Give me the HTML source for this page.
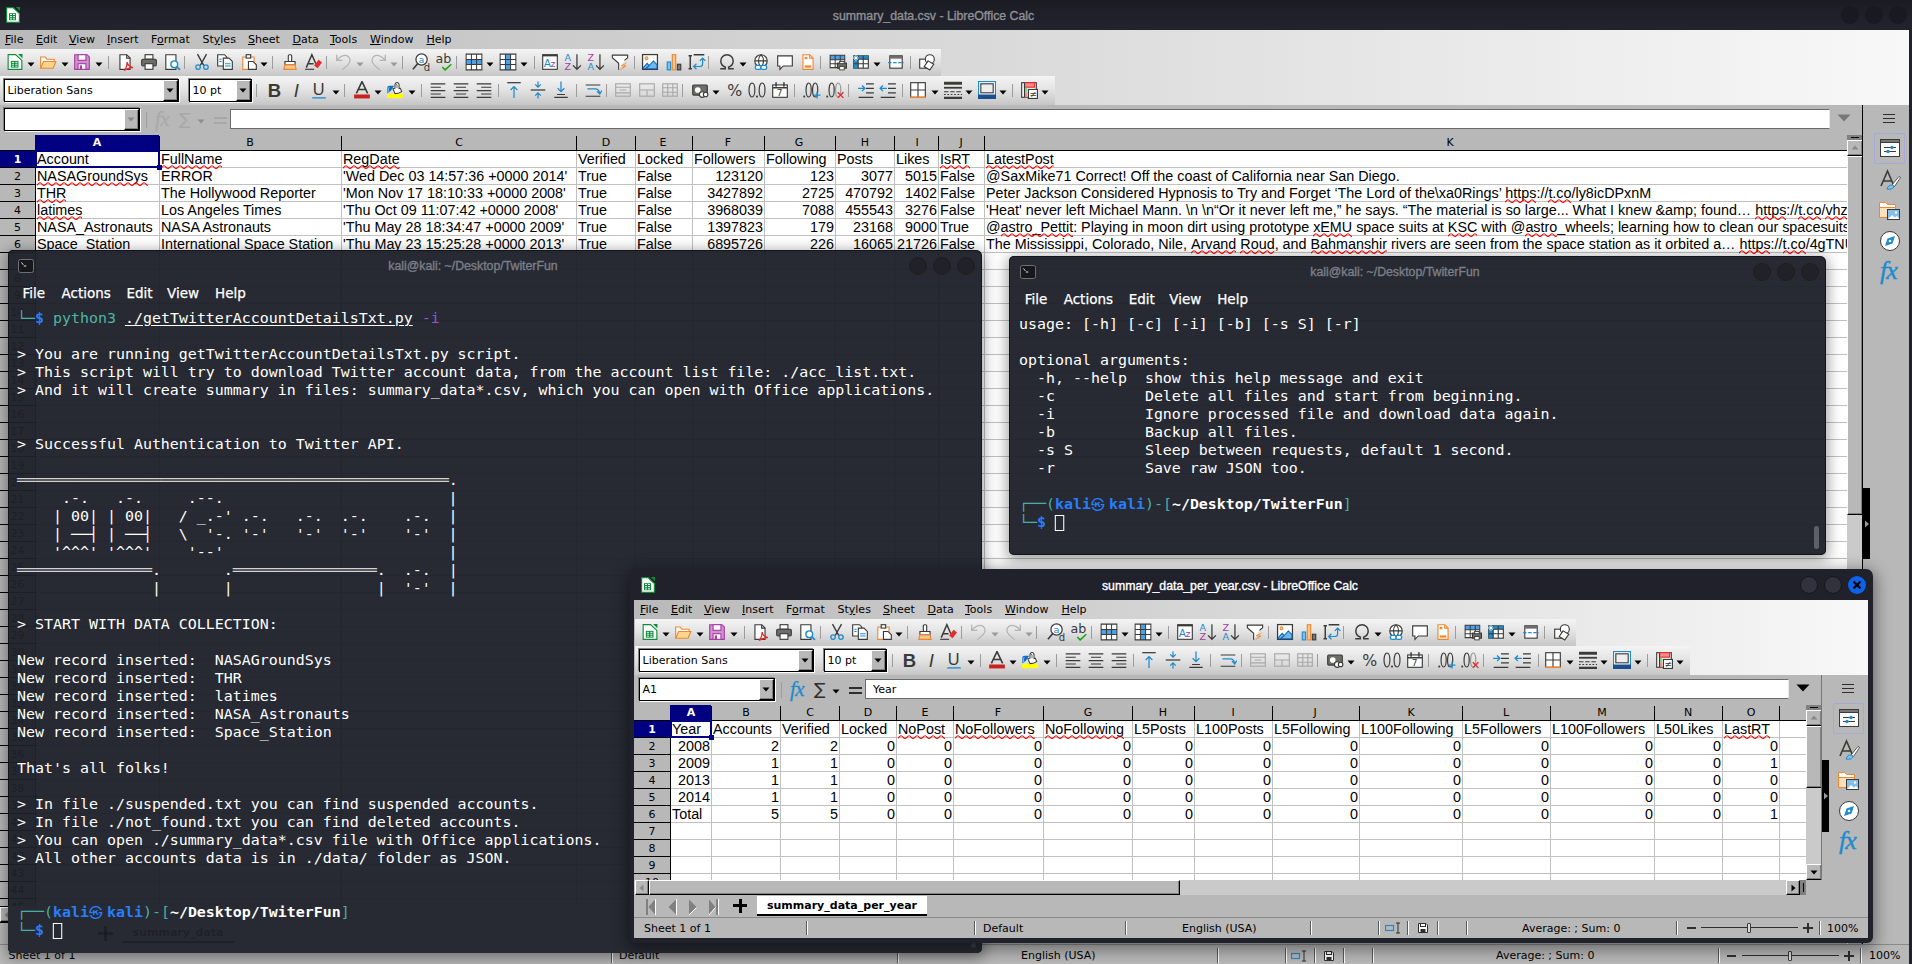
<!DOCTYPE html>
<html><head><meta charset="utf-8"><title>summary_data.csv - LibreOffice Calc</title>
<style>
html,body{margin:0;padding:0;}
body{width:1912px;height:964px;overflow:hidden;position:relative;background:#fff;font-family:"DejaVu Sans","Liberation Sans",sans-serif;}
div,span,svg{position:absolute;box-sizing:border-box;}
.ui{font-family:"DejaVu Sans","Liberation Sans",sans-serif;font-size:11px;color:#000;white-space:pre;}
.cell{font-family:"Liberation Sans",sans-serif;font-size:14.35px;color:#000;white-space:pre;line-height:17px;height:17px;}
.mono{font-family:"DejaVu Sans Mono","Liberation Mono",monospace;font-size:14.2px;line-height:18px;white-space:pre;color:#fff;transform-origin:0 0;transform:scaleX(1.05275);}
.kk{display:inline-block;width:17.098px;text-align:left;font-family:"Noto Sans CJK KR","Noto Sans CJK JP","DejaVu Sans",sans-serif;font-size:13px;line-height:10px;overflow:visible;}
.mono span{position:static;}
.u{text-decoration:underline;}
.sq{position:relative !important;display:inline-block;}
.sq svg{left:0;bottom:-0.7px;width:100%;height:4px;overflow:hidden;}
</style></head><body>
<svg width="0" height="0" style="left:0;top:0"><defs><pattern id="wv" width="8" height="4" patternUnits="userSpaceOnUse"><path d="M-1 3.4C0.5 3.4 1.5 0.7 3 0.7S5.500 3.4 7 3.4 9.500 0.7 11 0.7" fill="none" stroke="#ff0000" stroke-width="1.1"/></pattern></defs></svg>
<!-- main LibreOffice Calc window: summary_data.csv -->
<div style="left:0px;top:0px;width:1912px;height:30px;background:linear-gradient(180deg,#1b1c23,#22232d);"></div><div style="left:733.5px;top:7px;width:400px;text-align:center;font-family:'Liberation Sans',sans-serif;font-size:12.3px;-webkit-text-stroke:0.35px #8f9197;line-height:18px;color:#8f9197;white-space:pre">summary_data.csv - LibreOffice Calc</div><div style="left:1841px;top:6px;width:18px;height:18px;border-radius:50%;background:#191a21;"></div><div style="left:1865px;top:6px;width:18px;height:18px;border-radius:50%;background:#191a21;"></div><div style="left:1889px;top:6px;width:18px;height:18px;border-radius:50%;background:#191a21;"></div><svg style="left:6px;top:7px" width="14" height="16" viewBox="0 0 14 16"><path d="M0.600 0.600H7L13.400 6.500V15.400H0.600z" fill="#fff" stroke="#0f8a3a" stroke-width="1.200"/><path d="M9.800 0H14V4.200z" fill="#0f8a3a"/><rect x="3" y="6.200" width="7" height="7" fill="#0f8a3a"/><path d="M4 7.500h2M7 7.500h2M4 9.700h2M7 9.700h2M4 11.900h2M7 11.900h2" stroke="#fff" stroke-width="1"/></svg><div style="left:0px;top:30px;width:1912px;height:75px;background:linear-gradient(90deg,#b9b9b9,#f8f8f8);"></div><div class="ui" style="left:5px;top:32px;line-height:15px;font-size:11px"><span class="u" style="position:static">F</span>ile</div><div class="ui" style="left:36px;top:32px;line-height:15px;font-size:11px"><span class="u" style="position:static">E</span>dit</div><div class="ui" style="left:69px;top:32px;line-height:15px;font-size:11px"><span class="u" style="position:static">V</span>iew</div><div class="ui" style="left:107px;top:32px;line-height:15px;font-size:11px"><span class="u" style="position:static">I</span>nsert</div><div class="ui" style="left:151px;top:32px;line-height:15px;font-size:11px">F<span class="u" style="position:static">o</span>rmat</div><div class="ui" style="left:202.5px;top:32px;line-height:15px;font-size:11px">St<span class="u" style="position:static">y</span>les</div><div class="ui" style="left:248px;top:32px;line-height:15px;font-size:11px"><span class="u" style="position:static">S</span>heet</div><div class="ui" style="left:292.5px;top:32px;line-height:15px;font-size:11px"><span class="u" style="position:static">D</span>ata</div><div class="ui" style="left:330px;top:32px;line-height:15px;font-size:11px"><span class="u" style="position:static">T</span>ools</div><div class="ui" style="left:370px;top:32px;line-height:15px;font-size:11px"><span class="u" style="position:static">W</span>indow</div><div class="ui" style="left:426.5px;top:32px;line-height:15px;font-size:11px"><span class="u" style="position:static">H</span>elp</div><div style="left:0px;top:49px;width:941px;height:27px;background:linear-gradient(180deg,#f4f4f4 0%,#e4e4e4 45%,#c6c6c6 100%);"></div><div style="left:0px;top:76px;width:1055px;height:29px;background:linear-gradient(180deg,#f4f4f4 0%,#e4e4e4 45%,#c6c6c6 100%);"></div><svg style="left:5.699999999999999px;top:53.0px" width="18" height="18" viewBox="0 0 16 16"><path d="M1.900 1.400h6.600l5.600 5.200v8H1.900z" fill="#fff" stroke="#0f8a3a" stroke-width="1"/><path d="M10.700 0.900h3.900v3.700z" fill="#0f8a3a"/><rect x="4.300" y="7" width="6.800" height="6" fill="#0f8a3a"/><path d="M5.200 8.300h2M8.200 8.300h2M5.200 10h2M8.200 10h2M5.200 11.700h2M8.200 11.700h2" stroke="#fff" stroke-width=".8"/></svg><svg style="left:26.7px;top:61.5px" width="8" height="5" viewBox="0 0 8 5"><path d="M0.5 0.5h7L4 4.5z" fill="#000"/></svg><svg style="left:38.7px;top:53.0px" width="18" height="18" viewBox="0 0 16 16"><path d="M1.5 13.5v-10h4l1.5 2h6.5v2" fill="#fff" stroke="#ed8733"/><path d="M1.5 13.5l2.5-6h11l-2.5 6z" fill="#fbd68b" stroke="#ed8733"/></svg><svg style="left:60.7px;top:61.5px" width="8" height="5" viewBox="0 0 8 5"><path d="M0.5 0.5h7L4 4.5z" fill="#000"/></svg><svg style="left:73.2px;top:53.0px" width="18" height="18" viewBox="0 0 16 16"><path d="M1.5 1.5h11l2 2v11h-13z" fill="#d58fd3" stroke="#a33e9f"/><rect x="4.5" y="1.5" width="7" height="5" fill="#fff" stroke="#a33e9f"/><rect x="4.5" y="9.5" width="7" height="5" fill="#fff" stroke="#a33e9f"/><rect x="6" y="11" width="2" height="3.5" fill="#a33e9f"/></svg><svg style="left:95.2px;top:61.5px" width="8" height="5" viewBox="0 0 8 5"><path d="M0.5 0.5h7L4 4.5z" fill="#000"/></svg><div style="left:108px;top:56px;width:1px;height:13px;background:#9c9c9c;"></div><svg style="left:116.2px;top:53.0px" width="18" height="18" viewBox="0 0 16 16"><path d="M3.5 1.5h6l3 3v10h-9z" fill="#fff" stroke="#3a3a38"/><path d="M9.5 1.5v3h3" fill="none" stroke="#3a3a38"/><path d="M8 15c1-2 2-5 2-7 0 2 2 4 5 5-3 0-5 1-7 2z" fill="none" stroke="#e9292b" stroke-width="1.2"/></svg><svg style="left:139.7px;top:53.0px" width="18" height="18" viewBox="0 0 16 16"><rect x="4.5" y="1.5" width="7" height="4" fill="#fff" stroke="#3a3a38"/><rect x="1.5" y="5.5" width="13" height="6" rx="1" fill="#6d6d6b" stroke="#3a3a38"/><rect x="4.5" y="9.5" width="7" height="5" fill="#fff" stroke="#3a3a38"/></svg><svg style="left:163.2px;top:53.0px" width="18" height="18" viewBox="0 0 16 16"><path d="M2.5 1.5h9v13h-9z" fill="#fff" stroke="#3a3a38"/><circle cx="10" cy="10" r="3" fill="#fff" stroke="#1e8bcd" stroke-width="1.3"/><path d="M12.2 12.2l2.8 2.8" stroke="#1e8bcd" stroke-width="1.6"/></svg><div style="left:184px;top:56px;width:1px;height:13px;background:#9c9c9c;"></div><svg style="left:192.7px;top:53.0px" width="18" height="18" viewBox="0 0 16 16"><path d="M4 1l5.5 10M12 1L6.5 11" stroke="#3a3a38" stroke-width="1.2" fill="none"/><circle cx="4.5" cy="12.5" r="2" fill="none" stroke="#1e8bcd" stroke-width="1.2"/><circle cx="11.5" cy="12.5" r="2" fill="none" stroke="#1e8bcd" stroke-width="1.2"/></svg><svg style="left:216.2px;top:53.0px" width="18" height="18" viewBox="0 0 16 16"><path d="M1.5 1.5h6l2 2v8h-8z" fill="#fff" stroke="#3a3a38"/><path d="M6.5 4.5h5l3 3v7h-8z" fill="#fff" stroke="#3a3a38"/><path d="M8 9.5h5M8 11.5h5" stroke="#1e8bcd"/><path d="M3 5.5h2M3 7.5h2" stroke="#1e8bcd"/></svg><svg style="left:239.7px;top:53.0px" width="18" height="18" viewBox="0 0 16 16"><path d="M2.5 3.5h10v11h-10z" fill="#fff" stroke="#ed8733"/><rect x="5.5" y="1.5" width="4" height="3" fill="#fff" stroke="#3a3a38"/><path d="M7.5 7.5h4l3 3v4h-7z" fill="#fff" stroke="#3a3a38"/></svg><svg style="left:259.7px;top:61.5px" width="8" height="5" viewBox="0 0 8 5"><path d="M0.5 0.5h7L4 4.5z" fill="#000"/></svg><div style="left:272px;top:56px;width:1px;height:13px;background:#9c9c9c;"></div><svg style="left:280.7px;top:53.0px" width="18" height="18" viewBox="0 0 16 16"><rect x="6.5" y="1.5" width="3" height="6" rx="1" fill="#fff" stroke="#3a3a38"/><path d="M3.500 7.500h9v3h-9z" fill="#fff" stroke="#3a3a38"/><path d="M3.5 10.500h9l1 4h-11z" fill="#f8c58c" stroke="#ed8733"/></svg><svg style="left:304.2px;top:53.0px" width="18" height="18" viewBox="0 0 16 16"><path d="M2 13L7 1.500l3.500 8M3.500 9.5h5" fill="none" stroke="#3a3a38" stroke-width="1.300"/><path d="M1 14.5h8" stroke="#3a3a38"/><path d="M9 11l4-5 3 2.500-4 5z" fill="#e9292b"/></svg><div style="left:326px;top:56px;width:1px;height:13px;background:#9c9c9c;"></div><svg style="left:334.7px;top:53.0px" width="18" height="18" viewBox="0 0 16 16"><path d="M1.500 1.500v5h5M1.700 6.300C4.500 2.500 9 1 11.800 3.200c2.700 2.300 1.700 5.500-0.800 7.800L6.500 15" fill="none" stroke="#b4b4b4" stroke-width="1.150"/></svg><svg style="left:355.7px;top:61.5px" width="8" height="5" viewBox="0 0 8 5"><path d="M0.5 0.5h7L4 4.5z" fill="#9a9a9a"/></svg><svg style="left:368.7px;top:53.0px" width="18" height="18" viewBox="0 0 16 16"><path d="M14.500 1.500v5h-5M14.300 6.300C11.500 2.500 7 1 4.200 3.200c-2.700 2.300-1.700 5.500 0.800 7.800L9.500 15" fill="none" stroke="#b4b4b4" stroke-width="1.150"/></svg><svg style="left:390.2px;top:61.5px" width="8" height="5" viewBox="0 0 8 5"><path d="M0.5 0.5h7L4 4.5z" fill="#9a9a9a"/></svg><div style="left:402px;top:56px;width:1px;height:13px;background:#9c9c9c;"></div><svg style="left:411.7px;top:53.0px" width="18" height="18" viewBox="0 0 16 16"><circle cx="8.500" cy="5.800" r="5" fill="#fff" stroke="#3a3a38" stroke-width="1.100"/><path d="M5 9.500L0.800 14.500" stroke="#3a3a38" stroke-width="1.400"/><text x="5.700" y="8.800" font-size="8.500" font-family="DejaVu Sans" fill="#1e8bcd">a</text><text x="10.500" y="15.800" font-size="9" font-family="DejaVu Sans" fill="#3a3a38">d</text></svg><svg style="left:434.7px;top:53.0px" width="18" height="18" viewBox="0 0 16 16"><text x="0.500" y="8.500" font-size="10.500" font-family="DejaVu Sans" fill="#3a3a38" textLength="14" lengthAdjust="spacingAndGlyphs">ab</text><path d="M6.500 12.500l2.500 2.500 5.500-5" fill="none" stroke="#18a303" stroke-width="1.300"/></svg><div style="left:456px;top:56px;width:1px;height:13px;background:#9c9c9c;"></div><svg style="left:464.7px;top:53.0px" width="18" height="18" viewBox="0 0 16 16"><rect x="1" y="1" width="14" height="14" fill="#fff"/><rect x="1" y="5.700" width="14" height="4.600" fill="#4da0e6"/><path d="M1 1h14v14H1zM5.700 1v14M10.300 1v14M1 5.700h14M1 10.300h14" stroke="#3a3a38" stroke-width=".9" fill="none"/></svg><svg style="left:486.2px;top:61.5px" width="8" height="5" viewBox="0 0 8 5"><path d="M0.5 0.5h7L4 4.5z" fill="#000"/></svg><svg style="left:498.7px;top:53.0px" width="18" height="18" viewBox="0 0 16 16"><rect x="1" y="1" width="14" height="14" fill="#fff"/><rect x="5.700" y="1" width="4.600" height="14" fill="#4da0e6"/><path d="M1 1h14v14H1zM5.700 1v14M10.300 1v14M1 5.700h14M1 10.300h14" stroke="#3a3a38" stroke-width=".9" fill="none"/></svg><svg style="left:520.2px;top:61.5px" width="8" height="5" viewBox="0 0 8 5"><path d="M0.5 0.5h7L4 4.5z" fill="#000"/></svg><div style="left:534px;top:56px;width:1px;height:13px;background:#9c9c9c;"></div><svg style="left:541.2px;top:53.0px" width="18" height="18" viewBox="0 0 16 16"><rect x="1.500" y="1.500" width="13" height="13" fill="#fff" stroke="#3a3a38"/><rect x="1.500" y="1.500" width="13" height="1.500" fill="#3a3a38"/><text x="2.500" y="12.500" font-size="9.500" font-family="DejaVu Sans" fill="#1e8bcd">A</text><text x="8.500" y="12.500" font-size="8.500" font-family="DejaVu Sans" fill="#a33e9f">z</text></svg><svg style="left:564.2px;top:53.0px" width="18" height="18" viewBox="0 0 16 16"><text x="0.500" y="7.500" font-size="8.500" font-family="DejaVu Sans" fill="#1e8bcd">A</text><text x="0.500" y="15.500" font-size="8.500" font-family="DejaVu Sans" fill="#a33e9f">Z</text><path d="M11.500 1v13.500M8 11l3.500 3.500L15 11" fill="none" stroke="#3a3a38" stroke-width="1.100"/></svg><svg style="left:587.2px;top:53.0px" width="18" height="18" viewBox="0 0 16 16"><text x="0.500" y="7.500" font-size="8.500" font-family="DejaVu Sans" fill="#a33e9f">Z</text><text x="0.500" y="15.500" font-size="8.500" font-family="DejaVu Sans" fill="#1e8bcd">A</text><path d="M11.500 1v13.500M8 11l3.500 3.500L15 11" fill="none" stroke="#3a3a38" stroke-width="1.100"/></svg><svg style="left:610.7px;top:53.0px" width="18" height="18" viewBox="0 0 16 16"><path d="M12 6.500L14.800 4.200V1.900H1.200v2.300L6.800 9.200V14.800" fill="#fff" stroke="#3a3a38" stroke-width="1"/><path d="M15 8l-6.500 3.300 2.600.600L7.300 16l6.700-4.600-2.600-.600z" fill="#ed8733"/><path d="M11.500 10.500l-.8 1.500" stroke="#ffd27a" stroke-width=".8"/></svg><div style="left:634px;top:56px;width:1px;height:13px;background:#9c9c9c;"></div><svg style="left:641.2px;top:53.0px" width="18" height="18" viewBox="0 0 16 16"><rect x="1.400" y="1.400" width="13.200" height="13.200" fill="#fff" stroke="#3a3a38" stroke-width="1.100"/><path d="M2 13l3.500-3.800 1.800 2 3.700-4.200 3.200 3.300V14H2z" fill="#6db8ee" stroke="#0d62b0" stroke-width=".9"/><path d="M4 14l3.300-2.800" stroke="#0d62b0" stroke-width=".9"/><circle cx="4.900" cy="4.700" r="1.300" fill="#fdd17a" stroke="#ed8733" stroke-width=".9"/></svg><svg style="left:664.7px;top:53.0px" width="18" height="18" viewBox="0 0 16 16"><rect x="2" y="8" width="3" height="7" fill="#83beec" stroke="#1e8bcd"/><rect x="6.500" y="1.500" width="3" height="13.500" fill="#f8c58c" stroke="#ed8733"/><rect x="11" y="10" width="3" height="5" fill="#797774" stroke="#3a3a38"/></svg><svg style="left:687.7px;top:53.0px" width="18" height="18" viewBox="0 0 16 16"><path d="M2 2.500v11.500M0.500 2.500h3M0.500 14h3M5 1.500h9.500" fill="none" stroke="#3a3a38" stroke-width="1.300"/><path d="M13 4.500v5c0 1.500-1 2.500-2.500 2.500H5M7.500 9.500L5 12l2.500 2.500M10.500 7L13 4.500 15.500 7" fill="none" stroke="#1e8bcd" stroke-width="1.100"/></svg><div style="left:708px;top:56px;width:1px;height:13px;background:#9c9c9c;"></div><svg style="left:717.7px;top:53.0px" width="18" height="18" viewBox="0 0 16 16"><path d="M2 14h4.500v-1.500C4 11.500 2.500 9.500 2.500 7a5.500 5.500 0 0 1 11 0c0 2.500-1.500 4.500-4 5.500V14H14" fill="none" stroke="#3a3a38" stroke-width="1.300"/></svg><svg style="left:738.7px;top:61.5px" width="8" height="5" viewBox="0 0 8 5"><path d="M0.5 0.5h7L4 4.5z" fill="#000"/></svg><svg style="left:752.2px;top:53.0px" width="18" height="18" viewBox="0 0 16 16"><circle cx="8" cy="7" r="5.500" fill="#fff" stroke="#3a3a38"/><path d="M2.500 7h11M8 1.500c-3 3-3 8 0 11M8 1.500c3 3 3 8 0 11" fill="none" stroke="#3a3a38"/><rect x="3" y="11" width="5" height="3.500" rx="1.500" fill="#fff" stroke="#1e8bcd" stroke-width="1.200"/><rect x="8" y="11" width="5" height="3.500" rx="1.500" fill="#fff" stroke="#1e8bcd" stroke-width="1.200"/></svg><svg style="left:775.7px;top:53.0px" width="18" height="18" viewBox="0 0 16 16"><path d="M1.500 2.500h13v9h-8l-3 3v-3h-2z" fill="#fff" stroke="#3a3a38"/></svg><svg style="left:798.7px;top:53.0px" width="18" height="18" viewBox="0 0 16 16"><path d="M3.500 1.500h6l3 3v10h-9z" fill="#fff" stroke="#ed8733"/><path d="M9.500 1.500v3h3" fill="none" stroke="#ed8733"/><rect x="5" y="11" width="6" height="2" fill="#ed8733"/><rect x="5" y="3.500" width="2.500" height="2" fill="#ed8733"/></svg><div style="left:820px;top:56px;width:1px;height:13px;background:#9c9c9c;"></div><svg style="left:829.2px;top:53.0px" width="18" height="18" viewBox="0 0 16 16"><rect x="1" y="2" width="13" height="11" fill="#fff"/><rect x="1" y="2" width="13" height="4" fill="#4da0e6"/><path d="M1 2h13v11H1zM1 6h13M1 9.500h13M5.500 2v11M10 2v11" stroke="#3a3a38" stroke-width=".9" fill="none"/><rect x="7.500" y="9" width="8" height="4.500" fill="#6d6d6b" stroke="#3a3a38"/><rect x="9.500" y="7.500" width="4" height="2" fill="#fff" stroke="#3a3a38" stroke-width=".8"/><rect x="9.500" y="12" width="4" height="3" fill="#fff" stroke="#3a3a38" stroke-width=".8"/></svg><svg style="left:851.7px;top:53.0px" width="18" height="18" viewBox="0 0 16 16"><rect x="1.500" y="2.500" width="13" height="11" fill="#fff" stroke="#3a3a38"/><rect x="1.500" y="2.500" width="13" height="3" fill="#1e8bcd"/><rect x="1.500" y="2.500" width="4" height="11" fill="#1e8bcd"/><path d="M1.500 5.500h13M1.500 9.500h13M5.500 2.500v11M10 2.500v11" stroke="#3a3a38" fill="none"/><path d="M3.500 2v5M1 4.500h5M2 3l3 3M5 3L2 6" stroke="#fff" stroke-width=".8"/></svg><svg style="left:872.7px;top:61.5px" width="8" height="5" viewBox="0 0 8 5"><path d="M0.5 0.5h7L4 4.5z" fill="#000"/></svg><svg style="left:886.7px;top:53.0px" width="18" height="18" viewBox="0 0 16 16"><rect x="2.500" y="2.500" width="11" height="11" fill="#fff" stroke="#3a3a38"/><rect x="2.500" y="2.500" width="11" height="2.500" fill="#6d6d6b"/><path d="M1 8.500h14" stroke="#1e8bcd" stroke-width="1.200" stroke-dasharray="3 1.500"/></svg><div style="left:910px;top:56px;width:1px;height:13px;background:#9c9c9c;"></div><svg style="left:917.7px;top:53.0px" width="18" height="18" viewBox="0 0 16 16"><rect x="1.500" y="5.500" width="8" height="8" fill="#fff" stroke="#3a3a38"/><circle cx="10.500" cy="5.500" r="4" fill="#fff" stroke="#3a3a38"/><path d="M9 7l5 3-3.500 5-5-3z" fill="#fff" stroke="#3a3a38"/></svg><div style="left:256px;top:83.5px;width:1px;height:13px;background:#9c9c9c;"></div><svg style="left:265.2px;top:80.5px" width="18" height="18" viewBox="0 0 16 16"><text x="2.500" y="14" font-size="16.500" font-weight="bold" font-family="Liberation Sans" fill="#3a3a38">B</text></svg><svg style="left:288.2px;top:80.5px" width="18" height="18" viewBox="0 0 16 16"><text x="5" y="14" font-size="16.500" font-style="italic" font-family="Liberation Sans" fill="#3a3a38">I</text></svg><svg style="left:310.2px;top:80.5px" width="18" height="18" viewBox="0 0 16 16"><text x="2.500" y="12.300" font-size="14.500" font-family="Liberation Sans" fill="#3a3a38">U</text><path d="M2 15h12" stroke="#1e8bcd" stroke-width="1.200"/></svg><svg style="left:331.7px;top:89.5px" width="8" height="5" viewBox="0 0 8 5"><path d="M0.5 0.5h7L4 4.5z" fill="#000"/></svg><div style="left:344px;top:83.5px;width:1px;height:13px;background:#9c9c9c;"></div><svg style="left:352.7px;top:80.5px" width="18" height="18" viewBox="0 0 16 16"><path d="M3 11L8 0.500 13 11M5 7.500h6" fill="none" stroke="#3a3a38" stroke-width="1.400"/><rect x="1" y="12" width="14" height="3.500" fill="#c9211e"/></svg><svg style="left:373.7px;top:89.5px" width="8" height="5" viewBox="0 0 8 5"><path d="M0.5 0.5h7L4 4.5z" fill="#000"/></svg><svg style="left:386.2px;top:80.5px" width="18" height="18" viewBox="0 0 16 16"><rect x="1" y="11.300" width="14.200" height="3.900" fill="#ffff00"/><path d="M1.200 11.200V6.200c0-1.300.700-2 2-2h4L4.500 8.500z" fill="#0d6cc4"/><path d="M2.300 10V6.500c0-.700.300-1 .9-1" fill="none" stroke="#6db8ee" stroke-width=".9"/><path d="M6.100 6.900l2 4.300 2.700-.2 3.200-1.700-1.300-2.800-1.100.2V3.400c0-2.700-3.600-2.700-3.600 0v3z" fill="#fff" stroke="#3a3a38" stroke-width=".9"/><path d="M9.800 6.400V3.700c0-.900-.900-.900-.900 0" fill="none" stroke="#3a3a38" stroke-width=".7"/></svg><svg style="left:408.2px;top:89.5px" width="8" height="5" viewBox="0 0 8 5"><path d="M0.5 0.5h7L4 4.5z" fill="#000"/></svg><div style="left:421px;top:83.5px;width:1px;height:13px;background:#9c9c9c;"></div><svg style="left:429.2px;top:80.5px" width="18" height="18" viewBox="0 0 16 16"><path d="M1.500 2.500h13M1.500 5.500h9M1.500 8.500h13M1.500 11.500h9M1.500 14.500h13" stroke="#3a3a38"/></svg><svg style="left:452.2px;top:80.5px" width="18" height="18" viewBox="0 0 16 16"><path d="M1.500 2.500h13M3.500 5.500h9M1.500 8.500h13M3.500 11.500h9M1.500 14.500h13" stroke="#3a3a38"/></svg><svg style="left:475.2px;top:80.5px" width="18" height="18" viewBox="0 0 16 16"><path d="M1.500 2.500h13M5.500 5.500h9M1.500 8.500h13M5.500 11.500h9M1.500 14.500h13" stroke="#3a3a38"/></svg><div style="left:498px;top:83.5px;width:1px;height:13px;background:#9c9c9c;"></div><svg style="left:505.20000000000005px;top:80.5px" width="18" height="18" viewBox="0 0 16 16"><path d="M2 1.500h12" stroke="#3a3a38" stroke-width="1.100"/><path d="M8 15V5M5 8l3-3 3 3" fill="none" stroke="#1e8bcd" stroke-width="1.100"/></svg><svg style="left:529.2px;top:80.5px" width="18" height="18" viewBox="0 0 16 16"><path d="M1.500 8h13" stroke="#3a3a38" stroke-width="1.100"/><path d="M8 0.500v5M5.500 3L8 5.500 10.500 3M8 15.500v-5M5.500 13L8 10.500l2.500 2.500" fill="none" stroke="#1e8bcd" stroke-width="1.100"/></svg><svg style="left:552.2px;top:80.5px" width="18" height="18" viewBox="0 0 16 16"><path d="M2 14.500h12M4.500 12h7" stroke="#3a3a38" stroke-width="1.100"/><path d="M8 0.500v9M5 6.500l3 3 3-3" fill="none" stroke="#1e8bcd" stroke-width="1.100"/></svg><div style="left:576px;top:83.5px;width:1px;height:13px;background:#9c9c9c;"></div><svg style="left:583.7px;top:80.5px" width="18" height="18" viewBox="0 0 16 16"><path d="M1.500 3.500h13M1.500 13.500h13" fill="none" stroke="#3a3a38"/><path d="M3 7h7c2.500 0 3.500 1.500 4 4M11.500 9l2.500 2.500 1.800-3" fill="none" stroke="#1e8bcd" stroke-width="1.100"/></svg><div style="left:606px;top:83.5px;width:1px;height:13px;background:#9c9c9c;"></div><svg style="left:614.2px;top:80.5px" width="18" height="18" viewBox="0 0 16 16"><rect x="1.500" y="2.500" width="13" height="11" fill="none" stroke="#a8a8a8"/><path d="M1.500 5.500h13M1.500 10.500h13M5 8h6" stroke="#a8a8a8" fill="none"/></svg><svg style="left:637.7px;top:80.5px" width="18" height="18" viewBox="0 0 16 16"><rect x="1.500" y="2.500" width="13" height="11" fill="none" stroke="#a8a8a8"/><path d="M1.500 8h13M8 8v5.500" stroke="#a8a8a8" fill="none"/></svg><svg style="left:660.7px;top:80.5px" width="18" height="18" viewBox="0 0 16 16"><rect x="1.500" y="2.500" width="13" height="11" fill="none" stroke="#a8a8a8"/><path d="M1.500 6h13M1.500 10h13M6 2.500v11M10.500 2.500v11" stroke="#a8a8a8" fill="none"/></svg><div style="left:682px;top:83.5px;width:1px;height:13px;background:#9c9c9c;"></div><svg style="left:690.7px;top:80.5px" width="18" height="18" viewBox="0 0 16 16"><rect x="1.500" y="3.500" width="13" height="9" rx="1" fill="#6d6d6b" stroke="#3a3a38"/><circle cx="6" cy="8" r="2.500" fill="#fff"/><circle cx="10" cy="12" r="2.500" fill="#fff" stroke="#3a3a38"/><circle cx="13" cy="12" r="2" fill="#fff" stroke="#3a3a38"/></svg><svg style="left:712.2px;top:89.5px" width="8" height="5" viewBox="0 0 8 5"><path d="M0.5 0.5h7L4 4.5z" fill="#000"/></svg><svg style="left:725.7px;top:80.5px" width="18" height="18" viewBox="0 0 16 16"><text x="1" y="13.500" font-size="14" font-family="DejaVu Sans" fill="#3a3a38">%</text></svg><svg style="left:748.2px;top:80.5px" width="18" height="18" viewBox="0 0 16 16"><ellipse cx="3.500" cy="8" rx="2.600" ry="6.200" fill="none" stroke="#3a3a38" stroke-width="1.050"/><ellipse cx="12.500" cy="8" rx="2.600" ry="6.200" fill="none" stroke="#3a3a38" stroke-width="1.050"/><rect x="7.200" y="13" width="1.600" height="1.600" fill="#3a3a38"/></svg><svg style="left:771.2px;top:80.5px" width="18" height="18" viewBox="0 0 16 16"><rect x="1.500" y="3.500" width="13" height="11" fill="#fff" stroke="#3a3a38"/><path d="M4.500 1v4M11.500 1v4M1.500 6h13" stroke="#3a3a38" stroke-width="1.300"/><text x="5" y="13.500" font-size="8" font-family="DejaVu Sans" fill="#3a3a38">7</text></svg><div style="left:794px;top:83.5px;width:1px;height:13px;background:#9c9c9c;"></div><svg style="left:802.7px;top:80.5px" width="18" height="18" viewBox="0 0 16 16"><rect x="0.300" y="13" width="1.600" height="1.600" fill="#3a3a38"/><ellipse cx="5" cy="8" rx="2.300" ry="6.200" fill="none" stroke="#3a3a38" stroke-width="1.050"/><ellipse cx="10.800" cy="8" rx="2.300" ry="6.200" fill="none" stroke="#3a3a38" stroke-width="1.050"/><path d="M12.500 9.500v6M9.500 12.500h6" stroke="#1e8bcd" stroke-width="1.200"/></svg><svg style="left:825.7px;top:80.5px" width="18" height="18" viewBox="0 0 16 16"><rect x="0.300" y="13" width="1.600" height="1.600" fill="#3a3a38"/><ellipse cx="5" cy="8" rx="2.300" ry="6.200" fill="none" stroke="#3a3a38" stroke-width="1.050"/><ellipse cx="10.800" cy="8" rx="2.300" ry="6.200" fill="none" stroke="#9a9a9a" stroke-width="1.050"/><path d="M10.500 10l5 5M15.500 10l-5 5" stroke="#e9292b" stroke-width="1.200"/></svg><div style="left:848px;top:83.5px;width:1px;height:13px;background:#9c9c9c;"></div><svg style="left:856.7px;top:80.5px" width="18" height="18" viewBox="0 0 16 16"><path d="M8 2.500h7M8 6.500h7M8 10.500h7M1.500 14.500h13" stroke="#3a3a38"/><path d="M1 6.500h6M4.500 4l2.500 2.500-2.500 2.500" fill="none" stroke="#1e8bcd" stroke-width="1.200"/></svg><svg style="left:879.2px;top:80.5px" width="18" height="18" viewBox="0 0 16 16"><path d="M8 2.500h7M8 6.500h7M8 10.500h7M1.500 14.500h13" stroke="#3a3a38"/><path d="M7 6.500H1M3.500 4L1 6.500 3.500 9" fill="none" stroke="#1e8bcd" stroke-width="1.200"/></svg><div style="left:902px;top:83.5px;width:1px;height:13px;background:#9c9c9c;"></div><svg style="left:908.7px;top:80.5px" width="18" height="18" viewBox="0 0 16 16"><rect x="1.500" y="1.500" width="13" height="13" fill="#fff" stroke="#3a3a38"/><path d="M8 1.500v13M1.500 8h13" stroke="#3a3a38"/><path d="M1 14.500h14" stroke="#ed8733" stroke-width="1.400"/></svg><svg style="left:930.7px;top:89.5px" width="8" height="5" viewBox="0 0 8 5"><path d="M0.5 0.5h7L4 4.5z" fill="#000"/></svg><svg style="left:943.7px;top:80.5px" width="18" height="18" viewBox="0 0 16 16"><path d="M0 2h16" stroke="#3a3a38" stroke-width="2.600"/><path d="M0 6h16" stroke="#3a3a38" stroke-width="1.600"/><path d="M0 9.500h16" stroke="#3a3a38" stroke-dasharray="4 1.500"/><path d="M0 12h16" stroke="#3a3a38" stroke-dasharray="1.500 1.500"/><path d="M0 15h16" stroke="#3a3a38" stroke-width="2"/></svg><svg style="left:965.2px;top:89.5px" width="8" height="5" viewBox="0 0 8 5"><path d="M0.5 0.5h7L4 4.5z" fill="#000"/></svg><svg style="left:977.7px;top:80.5px" width="18" height="18" viewBox="0 0 16 16"><rect x="0.500" y="0.500" width="15" height="15" fill="#fff" stroke="#1e8bcd"/><rect x="2.500" y="2.500" width="11" height="8" fill="#eee" stroke="#3a3a38"/><rect x="0" y="12" width="16" height="4" fill="#1c4f91"/></svg><svg style="left:999.2px;top:89.5px" width="8" height="5" viewBox="0 0 8 5"><path d="M0.5 0.5h7L4 4.5z" fill="#000"/></svg><div style="left:1012px;top:83.5px;width:1px;height:13px;background:#9c9c9c;"></div><svg style="left:1019.7px;top:80.5px" width="18" height="18" viewBox="0 0 16 16"><rect x="1.500" y="1.500" width="13" height="13" fill="#fff" stroke="#3a3a38"/><rect x="4" y="1.500" width="9" height="4" fill="#f48a8a" stroke="#e9292b"/><rect x="4" y="6" width="2.500" height="4" fill="#7fd88a"/><rect x="4" y="10" width="2.500" height="4.500" fill="#f48a8a"/><path d="M4 1.500v13" stroke="#3a3a38"/><rect x="7.500" y="7.500" width="8" height="8" fill="#fff" stroke="#3a3a38"/><text x="8.500" y="14.500" font-size="8" font-family="DejaVu Sans" fill="#3a3a38">≠</text></svg><svg style="left:1041.2px;top:89.5px" width="8" height="5" viewBox="0 0 8 5"><path d="M0.5 0.5h7L4 4.5z" fill="#000"/></svg><div style="left:4px;top:79px;width:175px;height:23px;background:#fff;border:1px solid #000;box-shadow:-1px -1px 0 #808080,1px 1px 0 #fff;"></div><div class="ui" style="left:7.5px;top:83.5px;line-height:14px;font-size:11px">Liberation Sans</div><div style="left:163px;top:80px;width:15px;height:21px;background:#b8b8b8;border-left:1px solid #fff;border-top:1px solid #fff;border-right:1px solid #000;border-bottom:1px solid #000;box-shadow:inset -1px -1px 0 #808080;"></div><svg style="left:166.0px;top:87.5px" width="8" height="5" viewBox="0 0 8 5"><path d="M0.5 0.5h7L4 4.5z" fill="#000"/></svg><div style="left:189px;top:79px;width:63px;height:23px;background:#fff;border:1px solid #000;box-shadow:-1px -1px 0 #808080,1px 1px 0 #fff;"></div><div class="ui" style="left:192.5px;top:83.5px;line-height:14px;font-size:11px">10 pt</div><div style="left:236px;top:80px;width:15px;height:21px;background:#b8b8b8;border-left:1px solid #fff;border-top:1px solid #fff;border-right:1px solid #000;border-bottom:1px solid #000;box-shadow:inset -1px -1px 0 #808080;"></div><svg style="left:239.0px;top:87.5px" width="8" height="5" viewBox="0 0 8 5"><path d="M0.5 0.5h7L4 4.5z" fill="#000"/></svg><div style="left:0px;top:105px;width:1912px;height:30px;background:#b8b8b8;"></div><div style="left:4px;top:108px;width:136px;height:23px;background:#fff;border:1px solid #000;box-shadow:-1px -1px 0 #808080,1px 1px 0 #fff;"></div><div style="left:124px;top:109px;width:15px;height:21px;background:#b8b8b8;border-left:1px solid #fff;border-top:1px solid #fff;border-right:1px solid #000;border-bottom:1px solid #000;box-shadow:inset -1px -1px 0 #808080;"></div><svg style="left:127.0px;top:116.5px" width="8" height="5" viewBox="0 0 8 5"><path d="M0.5 0.5h7L4 4.5z" fill="#8a8a8a"/></svg><div style="left:146px;top:112px;width:1px;height:16px;background:#9c9c9c;"></div><div style="left:155px;top:108px;width:18px;height:22px;font-family:'Liberation Serif',serif;font-style:italic;font-size:21px;line-height:22px;color:#aaaaaa;letter-spacing:-0.5px;-webkit-text-stroke:0.3px #aaaaaa">fx</div><div style="left:179px;top:108px;width:14px;height:22px;font-family:'DejaVu Sans',sans-serif;font-size:17px;line-height:22px;color:#a8a8a8">∑</div><svg style="left:196.5px;top:119px" width="8" height="5" viewBox="0 0 8 5"><path d="M0.5 0.5h7L4 4.5z" fill="#8e8e8e"/></svg><div style="left:214px;top:117px;width:13px;height:2px;background:#a8a8a8;"></div><div style="left:214px;top:122px;width:13px;height:2px;background:#a8a8a8;"></div><div style="left:230px;top:109px;width:1600px;height:20px;background:#fff;border-top:1px solid #6a6a6a;border-left:1px solid #6a6a6a;border-bottom:1px solid #6a6a6a;border-right:1px solid #e8e8e8;"></div><svg style="left:1837px;top:114px" width="14" height="8" viewBox="0 0 14 8"><path d="M0.5 0.5h13L7 7.5z" fill="#777"/></svg><div style="left:0;top:135px;width:1847px;height:771px;overflow:hidden"><div style="left:0px;top:0px;width:1847px;height:771px;background:#fff;overflow:hidden;"></div><div style="left:0px;top:0px;width:1847px;height:15px;background:#b8b8b8;"></div><div style="left:0px;top:15px;width:1847px;height:1px;background:#000;"></div><div style="left:0px;top:16px;width:35px;height:755px;background:#b8b8b8;"></div><div style="left:35px;top:16px;width:1px;height:755px;background:#000;"></div><div style="left:35px;top:0px;width:124px;height:15px;background:#000080;"></div><div style="left:0px;top:16px;width:35px;height:17px;background:#000080;"></div><div style="left:159px;top:1px;width:1px;height:14px;background:#000;"></div><div style="left:159px;top:16px;width:1px;height:755px;background:#c0c0c0;"></div><div style="left:341px;top:1px;width:1px;height:14px;background:#000;"></div><div style="left:341px;top:16px;width:1px;height:755px;background:#c0c0c0;"></div><div style="left:576px;top:1px;width:1px;height:14px;background:#000;"></div><div style="left:576px;top:16px;width:1px;height:755px;background:#c0c0c0;"></div><div style="left:635px;top:1px;width:1px;height:14px;background:#000;"></div><div style="left:635px;top:16px;width:1px;height:755px;background:#c0c0c0;"></div><div style="left:692px;top:1px;width:1px;height:14px;background:#000;"></div><div style="left:692px;top:16px;width:1px;height:755px;background:#c0c0c0;"></div><div style="left:764px;top:1px;width:1px;height:14px;background:#000;"></div><div style="left:764px;top:16px;width:1px;height:755px;background:#c0c0c0;"></div><div style="left:835px;top:1px;width:1px;height:14px;background:#000;"></div><div style="left:835px;top:16px;width:1px;height:755px;background:#c0c0c0;"></div><div style="left:894px;top:1px;width:1px;height:14px;background:#000;"></div><div style="left:894px;top:16px;width:1px;height:755px;background:#c0c0c0;"></div><div style="left:938px;top:1px;width:1px;height:14px;background:#000;"></div><div style="left:938px;top:16px;width:1px;height:755px;background:#c0c0c0;"></div><div style="left:984px;top:1px;width:1px;height:14px;background:#000;"></div><div style="left:984px;top:16px;width:1px;height:755px;background:#c0c0c0;"></div><div style="left:1925px;top:1px;width:1px;height:14px;background:#000;"></div><div style="left:1925px;top:16px;width:1px;height:755px;background:#c0c0c0;"></div><div class="ui" style="left:77px;top:0px;width:40px;text-align:center;line-height:15px;font-size:11px;font-weight:bold;color:#fff;">A</div><div class="ui" style="left:230px;top:0px;width:40px;text-align:center;line-height:15px;font-size:11px;">B</div><div class="ui" style="left:439px;top:0px;width:40px;text-align:center;line-height:15px;font-size:11px;">C</div><div class="ui" style="left:586px;top:0px;width:40px;text-align:center;line-height:15px;font-size:11px;">D</div><div class="ui" style="left:643px;top:0px;width:40px;text-align:center;line-height:15px;font-size:11px;">E</div><div class="ui" style="left:708px;top:0px;width:40px;text-align:center;line-height:15px;font-size:11px;">F</div><div class="ui" style="left:779px;top:0px;width:40px;text-align:center;line-height:15px;font-size:11px;">G</div><div class="ui" style="left:845px;top:0px;width:40px;text-align:center;line-height:15px;font-size:11px;">H</div><div class="ui" style="left:897px;top:0px;width:40px;text-align:center;line-height:15px;font-size:11px;">I</div><div class="ui" style="left:941px;top:0px;width:40px;text-align:center;line-height:15px;font-size:11px;">J</div><div class="ui" style="left:1430px;top:0px;width:40px;text-align:center;line-height:15px;font-size:11px;">K</div><div style="left:36px;top:32px;width:1811px;height:1px;background:#c0c0c0;"></div><div style="left:0px;top:32px;width:35px;height:1px;background:#000;"></div><div class="ui" style="left:0px;top:17px;width:35px;text-align:center;line-height:16px;font-size:11px;font-weight:bold;color:#fff;">1</div><div style="left:36px;top:49px;width:1811px;height:1px;background:#c0c0c0;"></div><div style="left:0px;top:49px;width:35px;height:1px;background:#000;"></div><div class="ui" style="left:0px;top:34px;width:35px;text-align:center;line-height:16px;font-size:11px;">2</div><div style="left:36px;top:66px;width:1811px;height:1px;background:#c0c0c0;"></div><div style="left:0px;top:66px;width:35px;height:1px;background:#000;"></div><div class="ui" style="left:0px;top:51px;width:35px;text-align:center;line-height:16px;font-size:11px;">3</div><div style="left:36px;top:83px;width:1811px;height:1px;background:#c0c0c0;"></div><div style="left:0px;top:83px;width:35px;height:1px;background:#000;"></div><div class="ui" style="left:0px;top:68px;width:35px;text-align:center;line-height:16px;font-size:11px;">4</div><div style="left:36px;top:100px;width:1811px;height:1px;background:#c0c0c0;"></div><div style="left:0px;top:100px;width:35px;height:1px;background:#000;"></div><div class="ui" style="left:0px;top:85px;width:35px;text-align:center;line-height:16px;font-size:11px;">5</div><div style="left:36px;top:117px;width:1811px;height:1px;background:#c0c0c0;"></div><div style="left:0px;top:117px;width:35px;height:1px;background:#000;"></div><div class="ui" style="left:0px;top:102px;width:35px;text-align:center;line-height:16px;font-size:11px;">6</div><div style="left:36px;top:134px;width:1811px;height:1px;background:#c0c0c0;"></div><div style="left:0px;top:134px;width:35px;height:1px;background:#000;"></div><div class="ui" style="left:0px;top:119px;width:35px;text-align:center;line-height:16px;font-size:11px;">7</div><div style="left:36px;top:151px;width:1811px;height:1px;background:#c0c0c0;"></div><div style="left:0px;top:151px;width:35px;height:1px;background:#000;"></div><div class="ui" style="left:0px;top:136px;width:35px;text-align:center;line-height:16px;font-size:11px;">8</div><div style="left:36px;top:168px;width:1811px;height:1px;background:#c0c0c0;"></div><div style="left:0px;top:168px;width:35px;height:1px;background:#000;"></div><div class="ui" style="left:0px;top:153px;width:35px;text-align:center;line-height:16px;font-size:11px;">9</div><div style="left:36px;top:185px;width:1811px;height:1px;background:#c0c0c0;"></div><div style="left:0px;top:185px;width:35px;height:1px;background:#000;"></div><div class="ui" style="left:0px;top:170px;width:35px;text-align:center;line-height:16px;font-size:11px;">10</div><div style="left:36px;top:202px;width:1811px;height:1px;background:#c0c0c0;"></div><div style="left:0px;top:202px;width:35px;height:1px;background:#000;"></div><div class="ui" style="left:0px;top:187px;width:35px;text-align:center;line-height:16px;font-size:11px;">11</div><div style="left:36px;top:219px;width:1811px;height:1px;background:#c0c0c0;"></div><div style="left:0px;top:219px;width:35px;height:1px;background:#000;"></div><div class="ui" style="left:0px;top:204px;width:35px;text-align:center;line-height:16px;font-size:11px;">12</div><div style="left:36px;top:236px;width:1811px;height:1px;background:#c0c0c0;"></div><div style="left:0px;top:236px;width:35px;height:1px;background:#000;"></div><div class="ui" style="left:0px;top:221px;width:35px;text-align:center;line-height:16px;font-size:11px;">13</div><div style="left:36px;top:253px;width:1811px;height:1px;background:#c0c0c0;"></div><div style="left:0px;top:253px;width:35px;height:1px;background:#000;"></div><div class="ui" style="left:0px;top:238px;width:35px;text-align:center;line-height:16px;font-size:11px;">14</div><div style="left:36px;top:270px;width:1811px;height:1px;background:#c0c0c0;"></div><div style="left:0px;top:270px;width:35px;height:1px;background:#000;"></div><div class="ui" style="left:0px;top:255px;width:35px;text-align:center;line-height:16px;font-size:11px;">15</div><div style="left:36px;top:287px;width:1811px;height:1px;background:#c0c0c0;"></div><div style="left:0px;top:287px;width:35px;height:1px;background:#000;"></div><div class="ui" style="left:0px;top:272px;width:35px;text-align:center;line-height:16px;font-size:11px;">16</div><div style="left:36px;top:304px;width:1811px;height:1px;background:#c0c0c0;"></div><div style="left:0px;top:304px;width:35px;height:1px;background:#000;"></div><div class="ui" style="left:0px;top:289px;width:35px;text-align:center;line-height:16px;font-size:11px;">17</div><div style="left:36px;top:321px;width:1811px;height:1px;background:#c0c0c0;"></div><div style="left:0px;top:321px;width:35px;height:1px;background:#000;"></div><div class="ui" style="left:0px;top:306px;width:35px;text-align:center;line-height:16px;font-size:11px;">18</div><div style="left:36px;top:338px;width:1811px;height:1px;background:#c0c0c0;"></div><div style="left:0px;top:338px;width:35px;height:1px;background:#000;"></div><div class="ui" style="left:0px;top:323px;width:35px;text-align:center;line-height:16px;font-size:11px;">19</div><div style="left:36px;top:355px;width:1811px;height:1px;background:#c0c0c0;"></div><div style="left:0px;top:355px;width:35px;height:1px;background:#000;"></div><div class="ui" style="left:0px;top:340px;width:35px;text-align:center;line-height:16px;font-size:11px;">20</div><div style="left:36px;top:372px;width:1811px;height:1px;background:#c0c0c0;"></div><div style="left:0px;top:372px;width:35px;height:1px;background:#000;"></div><div class="ui" style="left:0px;top:357px;width:35px;text-align:center;line-height:16px;font-size:11px;">21</div><div style="left:36px;top:389px;width:1811px;height:1px;background:#c0c0c0;"></div><div style="left:0px;top:389px;width:35px;height:1px;background:#000;"></div><div class="ui" style="left:0px;top:374px;width:35px;text-align:center;line-height:16px;font-size:11px;">22</div><div style="left:36px;top:406px;width:1811px;height:1px;background:#c0c0c0;"></div><div style="left:0px;top:406px;width:35px;height:1px;background:#000;"></div><div class="ui" style="left:0px;top:391px;width:35px;text-align:center;line-height:16px;font-size:11px;">23</div><div style="left:36px;top:423px;width:1811px;height:1px;background:#c0c0c0;"></div><div style="left:0px;top:423px;width:35px;height:1px;background:#000;"></div><div class="ui" style="left:0px;top:408px;width:35px;text-align:center;line-height:16px;font-size:11px;">24</div><div style="left:36px;top:440px;width:1811px;height:1px;background:#c0c0c0;"></div><div style="left:0px;top:440px;width:35px;height:1px;background:#000;"></div><div class="ui" style="left:0px;top:425px;width:35px;text-align:center;line-height:16px;font-size:11px;">25</div><div style="left:36px;top:457px;width:1811px;height:1px;background:#c0c0c0;"></div><div style="left:0px;top:457px;width:35px;height:1px;background:#000;"></div><div class="ui" style="left:0px;top:442px;width:35px;text-align:center;line-height:16px;font-size:11px;">26</div><div style="left:36px;top:474px;width:1811px;height:1px;background:#c0c0c0;"></div><div style="left:0px;top:474px;width:35px;height:1px;background:#000;"></div><div class="ui" style="left:0px;top:459px;width:35px;text-align:center;line-height:16px;font-size:11px;">27</div><div style="left:36px;top:491px;width:1811px;height:1px;background:#c0c0c0;"></div><div style="left:0px;top:491px;width:35px;height:1px;background:#000;"></div><div class="ui" style="left:0px;top:476px;width:35px;text-align:center;line-height:16px;font-size:11px;">28</div><div style="left:36px;top:508px;width:1811px;height:1px;background:#c0c0c0;"></div><div style="left:0px;top:508px;width:35px;height:1px;background:#000;"></div><div class="ui" style="left:0px;top:493px;width:35px;text-align:center;line-height:16px;font-size:11px;">29</div><div style="left:36px;top:525px;width:1811px;height:1px;background:#c0c0c0;"></div><div style="left:0px;top:525px;width:35px;height:1px;background:#000;"></div><div class="ui" style="left:0px;top:510px;width:35px;text-align:center;line-height:16px;font-size:11px;">30</div><div style="left:36px;top:542px;width:1811px;height:1px;background:#c0c0c0;"></div><div style="left:0px;top:542px;width:35px;height:1px;background:#000;"></div><div class="ui" style="left:0px;top:527px;width:35px;text-align:center;line-height:16px;font-size:11px;">31</div><div style="left:36px;top:559px;width:1811px;height:1px;background:#c0c0c0;"></div><div style="left:0px;top:559px;width:35px;height:1px;background:#000;"></div><div class="ui" style="left:0px;top:544px;width:35px;text-align:center;line-height:16px;font-size:11px;">32</div><div style="left:36px;top:576px;width:1811px;height:1px;background:#c0c0c0;"></div><div style="left:0px;top:576px;width:35px;height:1px;background:#000;"></div><div class="ui" style="left:0px;top:561px;width:35px;text-align:center;line-height:16px;font-size:11px;">33</div><div style="left:36px;top:593px;width:1811px;height:1px;background:#c0c0c0;"></div><div style="left:0px;top:593px;width:35px;height:1px;background:#000;"></div><div class="ui" style="left:0px;top:578px;width:35px;text-align:center;line-height:16px;font-size:11px;">34</div><div style="left:36px;top:610px;width:1811px;height:1px;background:#c0c0c0;"></div><div style="left:0px;top:610px;width:35px;height:1px;background:#000;"></div><div class="ui" style="left:0px;top:595px;width:35px;text-align:center;line-height:16px;font-size:11px;">35</div><div style="left:36px;top:627px;width:1811px;height:1px;background:#c0c0c0;"></div><div style="left:0px;top:627px;width:35px;height:1px;background:#000;"></div><div class="ui" style="left:0px;top:612px;width:35px;text-align:center;line-height:16px;font-size:11px;">36</div><div style="left:36px;top:644px;width:1811px;height:1px;background:#c0c0c0;"></div><div style="left:0px;top:644px;width:35px;height:1px;background:#000;"></div><div class="ui" style="left:0px;top:629px;width:35px;text-align:center;line-height:16px;font-size:11px;">37</div><div style="left:36px;top:661px;width:1811px;height:1px;background:#c0c0c0;"></div><div style="left:0px;top:661px;width:35px;height:1px;background:#000;"></div><div class="ui" style="left:0px;top:646px;width:35px;text-align:center;line-height:16px;font-size:11px;">38</div><div style="left:36px;top:678px;width:1811px;height:1px;background:#c0c0c0;"></div><div style="left:0px;top:678px;width:35px;height:1px;background:#000;"></div><div class="ui" style="left:0px;top:663px;width:35px;text-align:center;line-height:16px;font-size:11px;">39</div><div style="left:36px;top:695px;width:1811px;height:1px;background:#c0c0c0;"></div><div style="left:0px;top:695px;width:35px;height:1px;background:#000;"></div><div class="ui" style="left:0px;top:680px;width:35px;text-align:center;line-height:16px;font-size:11px;">40</div><div style="left:36px;top:712px;width:1811px;height:1px;background:#c0c0c0;"></div><div style="left:0px;top:712px;width:35px;height:1px;background:#000;"></div><div class="ui" style="left:0px;top:697px;width:35px;text-align:center;line-height:16px;font-size:11px;">41</div><div style="left:36px;top:729px;width:1811px;height:1px;background:#c0c0c0;"></div><div style="left:0px;top:729px;width:35px;height:1px;background:#000;"></div><div class="ui" style="left:0px;top:714px;width:35px;text-align:center;line-height:16px;font-size:11px;">42</div><div style="left:36px;top:746px;width:1811px;height:1px;background:#c0c0c0;"></div><div style="left:0px;top:746px;width:35px;height:1px;background:#000;"></div><div class="ui" style="left:0px;top:731px;width:35px;text-align:center;line-height:16px;font-size:11px;">43</div><div style="left:36px;top:763px;width:1811px;height:1px;background:#c0c0c0;"></div><div style="left:0px;top:763px;width:35px;height:1px;background:#000;"></div><div class="ui" style="left:0px;top:748px;width:35px;text-align:center;line-height:16px;font-size:11px;">44</div><div style="left:36px;top:780px;width:1811px;height:1px;background:#c0c0c0;"></div><div style="left:0px;top:780px;width:35px;height:1px;background:#000;"></div><div class="ui" style="left:0px;top:765px;width:35px;text-align:center;line-height:16px;font-size:11px;">45</div><div class="cell" style="left:37px;top:16px;">Account</div><div class="cell" style="left:161px;top:16px;"><span class="sq">FullName<svg><rect width="100%" height="4" fill="url(#wv)"/></svg></span></div><div class="cell" style="left:343px;top:16px;"><span class="sq">RegDate<svg><rect width="100%" height="4" fill="url(#wv)"/></svg></span></div><div class="cell" style="left:578px;top:16px;">Verified</div><div class="cell" style="left:637px;top:16px;">Locked</div><div class="cell" style="left:694px;top:16px;">Followers</div><div class="cell" style="left:766px;top:16px;">Following</div><div class="cell" style="left:837px;top:16px;">Posts</div><div class="cell" style="left:896px;top:16px;">Likes</div><div class="cell" style="left:940px;top:16px;"><span class="sq">IsRT<svg><rect width="100%" height="4" fill="url(#wv)"/></svg></span></div><div class="cell" style="left:986px;top:16px;"><span class="sq">LatestPost<svg><rect width="100%" height="4" fill="url(#wv)"/></svg></span></div><div class="cell" style="left:37px;top:33px;"><span class="sq">NASAGroundSys<svg><rect width="100%" height="4" fill="url(#wv)"/></svg></span></div><div class="cell" style="left:161px;top:33px;">ERROR</div><div class="cell" style="left:343px;top:33px;">'Wed Dec 03 14:57:36 +0000 2014'</div><div class="cell" style="left:578px;top:33px;">True</div><div class="cell" style="left:637px;top:33px;">False</div><div class="cell" style="left:692px;top:33px;width:71px;text-align:right;">123120</div><div class="cell" style="left:764px;top:33px;width:70px;text-align:right;">123</div><div class="cell" style="left:835px;top:33px;width:58px;text-align:right;">3077</div><div class="cell" style="left:894px;top:33px;width:43px;text-align:right;">5015</div><div class="cell" style="left:940px;top:33px;">False</div><div class="cell" style="left:986px;top:33px;">@SaxMike71 Correct! Off the coast of California near San Diego.</div><div class="cell" style="left:37px;top:50px;"><span class="sq">THR<svg><rect width="100%" height="4" fill="url(#wv)"/></svg></span></div><div class="cell" style="left:161px;top:50px;">The Hollywood Reporter</div><div class="cell" style="left:343px;top:50px;">'Mon Nov 17 18:10:33 +0000 2008'</div><div class="cell" style="left:578px;top:50px;">True</div><div class="cell" style="left:637px;top:50px;">False</div><div class="cell" style="left:692px;top:50px;width:71px;text-align:right;">3427892</div><div class="cell" style="left:764px;top:50px;width:70px;text-align:right;">2725</div><div class="cell" style="left:835px;top:50px;width:58px;text-align:right;">470792</div><div class="cell" style="left:894px;top:50px;width:43px;text-align:right;">1402</div><div class="cell" style="left:940px;top:50px;">False</div><div class="cell" style="left:986px;top:50px;">Peter Jackson Considered Hypnosis to Try and Forget ‘The Lord of the\xa0Rings’ <span class="sq">https<svg><rect width="100%" height="4" fill="url(#wv)"/></svg></span>://<span class="sq">t.co<svg><rect width="100%" height="4" fill="url(#wv)"/></svg></span>/ly8icDPxnM</div><div class="cell" style="left:37px;top:67px;"><span class="sq">latimes<svg><rect width="100%" height="4" fill="url(#wv)"/></svg></span></div><div class="cell" style="left:161px;top:67px;">Los Angeles Times</div><div class="cell" style="left:343px;top:67px;">'Thu Oct 09 11:07:42 +0000 2008'</div><div class="cell" style="left:578px;top:67px;">True</div><div class="cell" style="left:637px;top:67px;">False</div><div class="cell" style="left:692px;top:67px;width:71px;text-align:right;">3968039</div><div class="cell" style="left:764px;top:67px;width:70px;text-align:right;">7088</div><div class="cell" style="left:835px;top:67px;width:58px;text-align:right;">455543</div><div class="cell" style="left:894px;top:67px;width:43px;text-align:right;">3276</div><div class="cell" style="left:940px;top:67px;">False</div><div class="cell" style="left:986px;top:67px;">'Heat' never left Michael Mann. \n \n“Or it never left me,” he says. “The material is so large... What I knew &amp;amp; found… <span class="sq">https<svg><rect width="100%" height="4" fill="url(#wv)"/></svg></span>://<span class="sq">t.co<svg><rect width="100%" height="4" fill="url(#wv)"/></svg></span>/<span class="sq">vhzJ<svg><rect width="100%" height="4" fill="url(#wv)"/></svg></span></div><div class="cell" style="left:37px;top:84px;">NASA_Astronauts</div><div class="cell" style="left:161px;top:84px;">NASA Astronauts</div><div class="cell" style="left:343px;top:84px;">'Thu May 28 18:34:47 +0000 2009'</div><div class="cell" style="left:578px;top:84px;">True</div><div class="cell" style="left:637px;top:84px;">False</div><div class="cell" style="left:692px;top:84px;width:71px;text-align:right;">1397823</div><div class="cell" style="left:764px;top:84px;width:70px;text-align:right;">179</div><div class="cell" style="left:835px;top:84px;width:58px;text-align:right;">23168</div><div class="cell" style="left:894px;top:84px;width:43px;text-align:right;">9000</div><div class="cell" style="left:940px;top:84px;">True</div><div class="cell" style="left:986px;top:84px;">@<span class="sq">astro_Pettit<svg><rect width="100%" height="4" fill="url(#wv)"/></svg></span>: Playing in moon dirt using prototype <span class="sq">xEMU<svg><rect width="100%" height="4" fill="url(#wv)"/></svg></span> space suits at <span class="sq">KSC<svg><rect width="100%" height="4" fill="url(#wv)"/></svg></span> with @<span class="sq">astro<svg><rect width="100%" height="4" fill="url(#wv)"/></svg></span>_wheels; learning how to clean our spacesuits is</div><div class="cell" style="left:37px;top:101px;">Space_Station</div><div class="cell" style="left:161px;top:101px;">International Space Station</div><div class="cell" style="left:343px;top:101px;">'Thu May 23 15:25:28 +0000 2013'</div><div class="cell" style="left:578px;top:101px;">True</div><div class="cell" style="left:637px;top:101px;">False</div><div class="cell" style="left:692px;top:101px;width:71px;text-align:right;">6895726</div><div class="cell" style="left:764px;top:101px;width:70px;text-align:right;">226</div><div class="cell" style="left:835px;top:101px;width:58px;text-align:right;">16065</div><div class="cell" style="left:894px;top:101px;width:43px;text-align:right;">21726</div><div class="cell" style="left:940px;top:101px;">False</div><div class="cell" style="left:986px;top:101px;">The Mississippi, Colorado, Nile, <span class="sq">Arvand<svg><rect width="100%" height="4" fill="url(#wv)"/></svg></span> <span class="sq">Roud<svg><rect width="100%" height="4" fill="url(#wv)"/></svg></span>, and <span class="sq">Bahmanshir<svg><rect width="100%" height="4" fill="url(#wv)"/></svg></span> rivers are seen from the space station as it orbited a… <span class="sq">https<svg><rect width="100%" height="4" fill="url(#wv)"/></svg></span>://<span class="sq">t.co<svg><rect width="100%" height="4" fill="url(#wv)"/></svg></span>/4gTNUx</div><div style="left:35px;top:15px;width:125px;height:18px;border:2px solid #000080;"></div><div style="left:157px;top:30px;width:5px;height:5px;background:#000080;border:0;"></div></div><div style="left:1847px;top:135px;width:16px;height:811px;background:#cacaca;"></div><div style="left:1847px;top:135px;width:16px;height:5px;background:#808080;"></div><div style="left:1851px;top:137px;width:8px;height:1px;background:#000;"></div><div style="left:1847px;top:140px;width:16px;height:16px;background:#b8b8b8;border-left:1px solid #fff;border-top:1px solid #fff;border-right:1px solid #000;border-bottom:1px solid #000;box-shadow:inset -1px -1px 0 #808080;"></div><svg style="left:1851.0px;top:145.0px" width="8" height="5" viewBox="0 0 8 5"><path d="M0.5 4.5h7L4 0.5z" fill="#8a8a8a"/></svg><div style="left:1847px;top:156px;width:16px;height:359px;background:#b8b8b8;border-left:1px solid #fff;border-top:1px solid #fff;border-right:1px solid #000;border-bottom:1px solid #000;box-shadow:inset -1px -1px 0 #808080;"></div><div style="left:1847px;top:930px;width:16px;height:16px;background:#b8b8b8;border-left:1px solid #fff;border-top:1px solid #fff;border-right:1px solid #000;border-bottom:1px solid #000;box-shadow:inset -1px -1px 0 #808080;"></div><svg style="left:1851.0px;top:936.0px" width="8" height="5" viewBox="0 0 8 5"><path d="M0.5 0.5h7L4 4.5z" fill="#000"/></svg><div style="left:1863px;top:105px;width:46px;height:841px;background:#b8b8b8;"></div><div style="left:1862px;top:105px;width:1px;height:841px;background:#000;"></div><div style="left:1883px;top:114px;width:12px;height:1px;background:#2e2e2e;"></div><div style="left:1883px;top:118px;width:12px;height:1px;background:#2e2e2e;"></div><div style="left:1883px;top:122px;width:12px;height:1px;background:#2e2e2e;"></div><div style="left:1874px;top:133px;width:31px;height:31px;border:1px solid #a9a9d6;border-radius:2px;"></div><svg style="left:1877.5px;top:136px" width="24" height="24" viewBox="0 0 24 24"><rect x="2.500" y="3.500" width="19" height="17" fill="#fafafa" stroke="#3a3a38"/><rect x="2.500" y="3.500" width="19" height="3" fill="#797774" stroke="#3a3a38"/><path d="M6 11.500h12M6 15.500h12" stroke="#3a3a38"/><circle cx="14" cy="11.500" r="1.700" fill="#1e8bcd"/><circle cx="10" cy="15.500" r="1.700" fill="#1e8bcd"/></svg><svg style="left:1877.5px;top:168px" width="24" height="24" viewBox="0 0 24 24"><path d="M3 18L9.500 3 16 18M5.500 13h8" fill="none" stroke="#3a3a38" stroke-width="1.600"/><path d="M14 17l7-8.500 1.500 1-6 9z" fill="#fff" stroke="#3a3a38" stroke-width=".8"/><path d="M9 21c1-3 3-4.500 5.500-4 1.500 1 1.500 2.500 0 3.500-2 1-4 1-5.500.5z" fill="#83beec" stroke="#1e8bcd"/></svg><svg style="left:1877.5px;top:199px" width="24" height="24" viewBox="0 0 24 24"><path d="M1.500 18.500v-15h6l2 2h8v3" fill="#fff" stroke="#ed8733"/><path d="M1.500 18.500v-10h16v10z" fill="#fbe0bd" stroke="#ed8733"/><rect x="9.500" y="10.500" width="12" height="10" fill="#83beec" stroke="#3a3a38"/><path d="M10 20l4-4 3 2.500 2-1.500 2.500 3z" fill="#fff"/><circle cx="18" cy="13.500" r="1.200" fill="#fff"/></svg><svg style="left:1877.5px;top:229px" width="24" height="24" viewBox="0 0 24 24"><circle cx="12" cy="12" r="9.500" fill="#fff" stroke="#3a3a38"/><path d="M17 7l-2.500 7.500L7 17l2.500-7.500z" fill="#1e8bcd"/><circle cx="12" cy="12" r="1.300" fill="#fff"/></svg><div style="left:1880px;top:256px;width:26px;height:30px;font-family:'Liberation Serif',serif;font-style:italic;font-size:26px;line-height:30px;color:#1e8bcd;letter-spacing:-1px;-webkit-text-stroke:0.4px #1e8bcd">fx</div><div style="left:1863px;top:488px;width:7px;height:71px;background:#000;"></div><svg style="left:1864px;top:519.5px" width="6" height="8" viewBox="0 0 6 8"><path d="M1 0.500v7L5 4z" fill="#9a9a9a"/></svg><div style="left:0px;top:906px;width:1847px;height:40px;background:#b8b8b8;"></div><div style="left:0px;top:906px;width:1847px;height:1px;background:#000;"></div><div style="left:0px;top:907px;width:1830px;height:15px;background:#cacaca;"></div><div style="left:0px;top:907px;width:14px;height:15px;background:#b8b8b8;border-left:1px solid #fff;border-top:1px solid #fff;border-right:1px solid #000;border-bottom:1px solid #000;box-shadow:inset -1px -1px 0 #808080;"></div><svg style="left:4.0px;top:910.5px" width="5" height="8" viewBox="0 0 5 8"><path d="M4.5 0.5v7L0.5 4z" fill="#8a8a8a"/></svg><div style="left:14px;top:907px;width:700px;height:15px;background:#b8b8b8;border-left:1px solid #fff;border-top:1px solid #fff;border-right:1px solid #000;border-bottom:1px solid #000;box-shadow:inset -1px -1px 0 #808080;"></div><div style="left:0px;top:922px;width:1847px;height:1px;background:#000;"></div><div style="left:0px;top:944px;width:1912px;height:22px;background:#b8b8b8;"></div><div style="left:0px;top:944px;width:1912px;height:1px;background:#8a8a8a;"></div><div class="ui" style="left:8.5px;top:949.0px;line-height:14px">Sheet 1 of 1</div><div class="ui" style="left:619px;top:949.0px;line-height:14px">Default</div><div class="ui" style="left:1021px;top:949.0px;line-height:14px">English (USA)</div><div class="ui" style="left:1496px;top:949.0px;line-height:14px">Average: ; Sum: 0</div><div class="ui" style="left:1869px;top:949.0px;line-height:14px">100%</div><div style="left:611px;top:948px;width:1px;height:15px;background:#5a5a5a;"></div><div style="left:612px;top:948px;width:1px;height:15px;background:#fff;"></div><div style="left:897px;top:948px;width:1px;height:15px;background:#5a5a5a;"></div><div style="left:898px;top:948px;width:1px;height:15px;background:#fff;"></div><div style="left:1217px;top:948px;width:1px;height:15px;background:#5a5a5a;"></div><div style="left:1218px;top:948px;width:1px;height:15px;background:#fff;"></div><div style="left:1285px;top:948px;width:1px;height:15px;background:#5a5a5a;"></div><div style="left:1286px;top:948px;width:1px;height:15px;background:#fff;"></div><div style="left:1314px;top:948px;width:1px;height:15px;background:#5a5a5a;"></div><div style="left:1315px;top:948px;width:1px;height:15px;background:#fff;"></div><div style="left:1343px;top:948px;width:1px;height:15px;background:#5a5a5a;"></div><div style="left:1344px;top:948px;width:1px;height:15px;background:#fff;"></div><div style="left:1372px;top:948px;width:1px;height:15px;background:#5a5a5a;"></div><div style="left:1373px;top:948px;width:1px;height:15px;background:#fff;"></div><div style="left:1718px;top:948px;width:1px;height:15px;background:#5a5a5a;"></div><div style="left:1719px;top:948px;width:1px;height:15px;background:#fff;"></div><div style="left:1860px;top:948px;width:1px;height:15px;background:#5a5a5a;"></div><div style="left:1861px;top:948px;width:1px;height:15px;background:#fff;"></div><svg style="left:1291px;top:949.5px" width="16" height="12" viewBox="0 0 16 12"><rect x="0.500" y="3.500" width="8" height="5" fill="none" stroke="#1e8bcd" stroke-width="1.200"/><path d="M13 1v10M11 1h4M11 11h4" stroke="#2e2e2e" stroke-width="1" fill="none"/></svg><svg style="left:1324px;top:950.5px" width="10" height="10" viewBox="0 0 10 10"><path d="M0.500 0.500h7.500l1.500 1.500v7.500h-9z" fill="#fff" stroke="#2e2e2e"/><rect x="2.500" y="0.500" width="5" height="3" fill="#fff" stroke="#2e2e2e"/><rect x="2.500" y="6" width="5" height="3.500" fill="#2e2e2e"/></svg><div style="left:1727px;top:954.5px;width:9px;height:2px;background:#2e2e2e;"></div><div style="left:1742px;top:954.5px;width:97px;height:1px;background:#2e2e2e;"></div><div style="left:1788px;top:950.5px;width:4px;height:10px;background:#d9d9d9;border:1px solid #3a3a3a;border-radius:1px;"></div><div style="left:1844px;top:954.5px;width:10px;height:2px;background:#2e2e2e;"></div><div style="left:1848px;top:950.5px;width:2px;height:10px;background:#2e2e2e;"></div><div style="left:1909px;top:30px;width:3px;height:934px;background:#20212b;"></div><!-- terminal 1 -->
<div style="left:8px;top:250px;width:974px;height:703px;background:#272a33;border-radius:5px 6px 5px 5px;box-shadow:0 3px 14px 2px rgba(0,0,0,0.38),inset 0 0 0 1px rgba(14,15,20,0.75);overflow:hidden;"><div style="left:0;top:0;width:974px;height:703px;background:repeating-linear-gradient(180deg,rgba(0,0,0,0.08) 0,rgba(0,0,0,0.08) 1px,transparent 1px,transparent 17px);background-position:0 2px"></div><div style="left:27px;top:0;width:1px;height:703px;background:rgba(0,0,0,0.08)"></div><div style="left:151px;top:0;width:1px;height:703px;background:rgba(0,0,0,0.08)"></div><div style="left:333px;top:0;width:1px;height:703px;background:rgba(0,0,0,0.08)"></div><div style="left:568px;top:0;width:1px;height:703px;background:rgba(0,0,0,0.08)"></div><div style="left:627px;top:0;width:1px;height:703px;background:rgba(0,0,0,0.08)"></div><div style="left:684px;top:0;width:1px;height:703px;background:rgba(0,0,0,0.08)"></div><div style="left:756px;top:0;width:1px;height:703px;background:rgba(0,0,0,0.08)"></div><div style="left:827px;top:0;width:1px;height:703px;background:rgba(0,0,0,0.08)"></div><div style="left:886px;top:0;width:1px;height:703px;background:rgba(0,0,0,0.08)"></div><div style="left:930px;top:0;width:1px;height:703px;background:rgba(0,0,0,0.08)"></div><div style="left:0;top:0;width:27px;height:703px;background:rgba(0,0,0,0.03)"></div><div style="left:0;top:0;width:27px;height:703px;background:repeating-linear-gradient(180deg,rgba(0,0,0,0.16) 0,rgba(0,0,0,0.16) 1px,transparent 1px,transparent 17px);background-position:0 2px"></div><div style="left:27px;top:0;width:1px;height:703px;background:rgba(0,0,0,0.12)"></div><div class="ui" style="left:-8px;top:21px;width:35px;text-align:center;line-height:16px;font-size:11px;color:rgba(0,0,0,0.24)">8</div><div class="ui" style="left:-8px;top:38px;width:35px;text-align:center;line-height:16px;font-size:11px;color:rgba(0,0,0,0.24)">9</div><div class="ui" style="left:-8px;top:55px;width:35px;text-align:center;line-height:16px;font-size:11px;color:rgba(0,0,0,0.24)">10</div><div class="ui" style="left:-8px;top:72px;width:35px;text-align:center;line-height:16px;font-size:11px;color:rgba(0,0,0,0.24)">11</div><div class="ui" style="left:-8px;top:89px;width:35px;text-align:center;line-height:16px;font-size:11px;color:rgba(0,0,0,0.24)">12</div><div class="ui" style="left:-8px;top:106px;width:35px;text-align:center;line-height:16px;font-size:11px;color:rgba(0,0,0,0.24)">13</div><div class="ui" style="left:-8px;top:123px;width:35px;text-align:center;line-height:16px;font-size:11px;color:rgba(0,0,0,0.24)">14</div><div class="ui" style="left:-8px;top:140px;width:35px;text-align:center;line-height:16px;font-size:11px;color:rgba(0,0,0,0.24)">15</div><div class="ui" style="left:-8px;top:157px;width:35px;text-align:center;line-height:16px;font-size:11px;color:rgba(0,0,0,0.24)">16</div><div class="ui" style="left:-8px;top:174px;width:35px;text-align:center;line-height:16px;font-size:11px;color:rgba(0,0,0,0.24)">17</div><div class="ui" style="left:-8px;top:191px;width:35px;text-align:center;line-height:16px;font-size:11px;color:rgba(0,0,0,0.24)">18</div><div class="ui" style="left:-8px;top:208px;width:35px;text-align:center;line-height:16px;font-size:11px;color:rgba(0,0,0,0.24)">19</div><div class="ui" style="left:-8px;top:225px;width:35px;text-align:center;line-height:16px;font-size:11px;color:rgba(0,0,0,0.24)">20</div><div class="ui" style="left:-8px;top:242px;width:35px;text-align:center;line-height:16px;font-size:11px;color:rgba(0,0,0,0.24)">21</div><div class="ui" style="left:-8px;top:259px;width:35px;text-align:center;line-height:16px;font-size:11px;color:rgba(0,0,0,0.24)">22</div><div class="ui" style="left:-8px;top:276px;width:35px;text-align:center;line-height:16px;font-size:11px;color:rgba(0,0,0,0.24)">23</div><div class="ui" style="left:-8px;top:293px;width:35px;text-align:center;line-height:16px;font-size:11px;color:rgba(0,0,0,0.24)">24</div><div class="ui" style="left:-8px;top:310px;width:35px;text-align:center;line-height:16px;font-size:11px;color:rgba(0,0,0,0.24)">25</div><div class="ui" style="left:-8px;top:327px;width:35px;text-align:center;line-height:16px;font-size:11px;color:rgba(0,0,0,0.24)">26</div><div class="ui" style="left:-8px;top:344px;width:35px;text-align:center;line-height:16px;font-size:11px;color:rgba(0,0,0,0.24)">27</div><div class="ui" style="left:-8px;top:361px;width:35px;text-align:center;line-height:16px;font-size:11px;color:rgba(0,0,0,0.24)">28</div><div class="ui" style="left:-8px;top:378px;width:35px;text-align:center;line-height:16px;font-size:11px;color:rgba(0,0,0,0.24)">29</div><div class="ui" style="left:-8px;top:395px;width:35px;text-align:center;line-height:16px;font-size:11px;color:rgba(0,0,0,0.24)">30</div><div class="ui" style="left:-8px;top:412px;width:35px;text-align:center;line-height:16px;font-size:11px;color:rgba(0,0,0,0.24)">31</div><div class="ui" style="left:-8px;top:429px;width:35px;text-align:center;line-height:16px;font-size:11px;color:rgba(0,0,0,0.24)">32</div><div class="ui" style="left:-8px;top:446px;width:35px;text-align:center;line-height:16px;font-size:11px;color:rgba(0,0,0,0.24)">33</div><div class="ui" style="left:-8px;top:463px;width:35px;text-align:center;line-height:16px;font-size:11px;color:rgba(0,0,0,0.24)">34</div><div class="ui" style="left:-8px;top:480px;width:35px;text-align:center;line-height:16px;font-size:11px;color:rgba(0,0,0,0.24)">35</div><div class="ui" style="left:-8px;top:497px;width:35px;text-align:center;line-height:16px;font-size:11px;color:rgba(0,0,0,0.24)">36</div><div class="ui" style="left:-8px;top:514px;width:35px;text-align:center;line-height:16px;font-size:11px;color:rgba(0,0,0,0.24)">37</div><div class="ui" style="left:-8px;top:531px;width:35px;text-align:center;line-height:16px;font-size:11px;color:rgba(0,0,0,0.24)">38</div><div class="ui" style="left:-8px;top:548px;width:35px;text-align:center;line-height:16px;font-size:11px;color:rgba(0,0,0,0.24)">39</div><div class="ui" style="left:-8px;top:565px;width:35px;text-align:center;line-height:16px;font-size:11px;color:rgba(0,0,0,0.24)">40</div><div class="ui" style="left:-8px;top:582px;width:35px;text-align:center;line-height:16px;font-size:11px;color:rgba(0,0,0,0.24)">41</div><div class="ui" style="left:-8px;top:599px;width:35px;text-align:center;line-height:16px;font-size:11px;color:rgba(0,0,0,0.24)">42</div><div class="ui" style="left:-8px;top:616px;width:35px;text-align:center;line-height:16px;font-size:11px;color:rgba(0,0,0,0.24)">43</div><div class="ui" style="left:-8px;top:633px;width:35px;text-align:center;line-height:16px;font-size:11px;color:rgba(0,0,0,0.24)">44</div><div class="ui" style="left:-8px;top:650px;width:35px;text-align:center;line-height:16px;font-size:11px;color:rgba(0,0,0,0.24)">45</div><div style="left:0;top:656px;width:974px;height:47px;background:#272a33"></div><div style="left:90px;top:682px;width:15px;height:3px;background:rgba(0,0,0,0.22)"></div><div style="left:96px;top:676px;width:3px;height:15px;background:rgba(0,0,0,0.22)"></div><div class="ui" style="left:114px;top:675px;width:112px;text-align:center;font-weight:bold;line-height:15px;font-size:11px;color:rgba(0,0,0,0.22)">summary_data</div><div style="left:114px;top:691px;width:112px;height:2px;background:rgba(0,0,0,0.22)"></div><div style="left:10px;top:9px;width:16px;height:14px;background:#17181c;border:1.500px solid #6d7076;border-radius:2.500px"></div><svg style="left:13px;top:12px" width="8" height="6" viewBox="0 0 8 6"><path d="M0.500 0.500L2.300 2.800M2.800 4h2.500" stroke="#fff" stroke-width=".9" fill="none"/></svg><div style="left:315px;top:7px;width:300px;text-align:center;font-family:'Liberation Sans',sans-serif;font-size:12.300px;-webkit-text-stroke:0.35px #7b7f88;line-height:18px;color:#7b7f88;white-space:pre">kali@kali: ~/Desktop/TwiterFun</div><div style="left:949px;top:7px;width:18px;height:18px;border-radius:50%;background:#212227;border:1px solid #1d1e23"></div><div style="left:925px;top:7px;width:18px;height:18px;border-radius:50%;background:#212227;border:1px solid #1d1e23"></div><div style="left:901px;top:7px;width:18px;height:18px;border-radius:50%;background:#212227;border:1px solid #1d1e23"></div><div style="left:14.5px;top:33px;font-family:'DejaVu Sans',sans-serif;font-size:13.500px;line-height:20px;color:#fff;white-space:pre;-webkit-text-stroke:0.25px #fff">File</div><div style="left:53.5px;top:33px;font-family:'DejaVu Sans',sans-serif;font-size:13.500px;line-height:20px;color:#fff;white-space:pre;-webkit-text-stroke:0.25px #fff">Actions</div><div style="left:118.5px;top:33px;font-family:'DejaVu Sans',sans-serif;font-size:13.500px;line-height:20px;color:#fff;white-space:pre;-webkit-text-stroke:0.25px #fff">Edit</div><div style="left:159px;top:33px;font-family:'DejaVu Sans',sans-serif;font-size:13.500px;line-height:20px;color:#fff;white-space:pre;-webkit-text-stroke:0.25px #fff">View</div><div style="left:207px;top:33px;font-family:'DejaVu Sans',sans-serif;font-size:13.500px;line-height:20px;color:#fff;white-space:pre;-webkit-text-stroke:0.25px #fff">Help</div><div class="mono" style="left:9px;top:59px;height:18px"><span style="color:#49aea5;">└─</span><span style="color:#277fff;font-weight:bold;">$</span> <span style="color:#4fb5a3;">python3</span> <span class="u" style="text-underline-offset:2px">./getTwitterAccountDetailsTxt.py</span> <span style="color:#9a55c4;">-i</span></div><div class="mono" style="left:9px;top:95px;height:18px">&gt; You are running getTwitterAccountDetailsTxt.py script.</div><div class="mono" style="left:9px;top:113px;height:18px">&gt; This script will try to download Twitter account data, from the account list file: ./acc_list.txt.</div><div class="mono" style="left:9px;top:131px;height:18px">&gt; And it will create summary in files: summary_data*.csv, which you can open with Office applications.</div><div class="mono" style="left:9px;top:185px;height:18px">&gt; Successful Authentication to Twitter API.</div><div class="mono" style="left:9px;top:221px;height:18px"><span style="color:#d4d4d4">════════════════════════════════════════════════</span>.</div><div class="mono" style="left:9px;top:239px;height:18px">     .-.   .-.     .--.                         |</div><div class="mono" style="left:9px;top:257px;height:18px">    | 00| | 00|   / _.-' .-.   .-.  .-.    .-.  |</div><div class="mono" style="left:9px;top:275px;height:18px">    | <span style="letter-spacing:0">──┤</span> | ──┤   \  '-. '-'   '-'  '-'    '-'  |</div><div class="mono" style="left:9px;top:293px;height:18px">    '^^^' '^^^'    '--'                         |</div><div class="mono" style="left:9px;top:311px;height:18px"><span style="color:#d4d4d4">═══════════════</span>.       .<span style="color:#d4d4d4">════════════════</span>.  .-.  |</div><div class="mono" style="left:9px;top:329px;height:18px">               |       |                |  '-'  |</div><div class="mono" style="left:9px;top:365px;height:18px">&gt; START WITH DATA COLLECTION:</div><div class="mono" style="left:9px;top:401px;height:18px">New record inserted:  NASAGroundSys</div><div class="mono" style="left:9px;top:419px;height:18px">New record inserted:  THR</div><div class="mono" style="left:9px;top:437px;height:18px">New record inserted:  latimes</div><div class="mono" style="left:9px;top:455px;height:18px">New record inserted:  NASA_Astronauts</div><div class="mono" style="left:9px;top:473px;height:18px">New record inserted:  Space_Station</div><div class="mono" style="left:9px;top:509px;height:18px">That's all folks!</div><div class="mono" style="left:9px;top:545px;height:18px">&gt; In file ./suspended.txt you can find suspended accounts.</div><div class="mono" style="left:9px;top:563px;height:18px">&gt; In file ./not_found.txt you can find deleted accounts.</div><div class="mono" style="left:9px;top:581px;height:18px">&gt; You can open ./summary_data*.csv file with Office applications.</div><div class="mono" style="left:9px;top:599px;height:18px">&gt; All other accounts data is in ./data/ folder as JSON.</div><div class="mono" style="left:9px;top:653px;height:18px"><span style="color:#49aea5;position:relative;top:-1px">┌──</span><span style="color:#49aea5;">(</span><span style="color:#277fff;font-weight:bold">kali<span class="kk">㉿</span>kali</span><span style="color:#49aea5;">)-[</span><span style="color:#fff;font-weight:bold;">~/Desktop/TwiterFun</span><span style="color:#49aea5;">]</span></div><div class="mono" style="left:9px;top:671px;height:18px"><span style="color:#49aea5;">└─</span><span style="color:#277fff;font-weight:bold;">$</span> <span style="display:inline-block;width:8.5px;height:16px;border:1px solid #fff;vertical-align:-3.5px;margin-left:0px"></span></div></div><div style="left:970.5px;top:942.5px;width:5px;height:5px;border-radius:50%;background:#3c3f48;"></div><!-- terminal 2 -->
<div style="left:1009px;top:256px;width:817px;height:299px;background:#272a33;border-radius:5px 6px 5px 5px;box-shadow:0 3px 14px 2px rgba(0,0,0,0.38),inset 0 0 0 1px rgba(14,15,20,0.75);overflow:hidden;"><div style="left:0;top:0;width:817px;height:299px;background:repeating-linear-gradient(180deg,rgba(0,0,0,0.08) 0,rgba(0,0,0,0.08) 1px,transparent 1px,transparent 17px);background-position:0 13px"></div><div style="left:11.2px;top:9px;width:16px;height:14px;background:#17181c;border:1.500px solid #6d7076;border-radius:2.500px"></div><svg style="left:14.2px;top:12px" width="8" height="6" viewBox="0 0 8 6"><path d="M0.500 0.500L2.300 2.800M2.800 4h2.500" stroke="#fff" stroke-width=".9" fill="none"/></svg><div style="left:236px;top:7px;width:300px;text-align:center;font-family:'Liberation Sans',sans-serif;font-size:12.300px;-webkit-text-stroke:0.35px #7b7f88;line-height:18px;color:#7b7f88;white-space:pre">kali@kali: ~/Desktop/TwiterFun</div><div style="left:792px;top:7px;width:18px;height:18px;border-radius:50%;background:#212227;border:1px solid #1d1e23"></div><div style="left:768px;top:7px;width:18px;height:18px;border-radius:50%;background:#212227;border:1px solid #1d1e23"></div><div style="left:744px;top:7px;width:18px;height:18px;border-radius:50%;background:#212227;border:1px solid #1d1e23"></div><div style="left:15.7px;top:33px;font-family:'DejaVu Sans',sans-serif;font-size:13.500px;line-height:20px;color:#fff;white-space:pre;-webkit-text-stroke:0.25px #fff">File</div><div style="left:54.7px;top:33px;font-family:'DejaVu Sans',sans-serif;font-size:13.500px;line-height:20px;color:#fff;white-space:pre;-webkit-text-stroke:0.25px #fff">Actions</div><div style="left:119.7px;top:33px;font-family:'DejaVu Sans',sans-serif;font-size:13.500px;line-height:20px;color:#fff;white-space:pre;-webkit-text-stroke:0.25px #fff">Edit</div><div style="left:160.2px;top:33px;font-family:'DejaVu Sans',sans-serif;font-size:13.500px;line-height:20px;color:#fff;white-space:pre;-webkit-text-stroke:0.25px #fff">View</div><div style="left:208.2px;top:33px;font-family:'DejaVu Sans',sans-serif;font-size:13.500px;line-height:20px;color:#fff;white-space:pre;-webkit-text-stroke:0.25px #fff">Help</div><div class="mono" style="left:10px;top:59px;height:18px">usage: [-h] [-c] [-i] [-b] [-s S] [-r]</div><div class="mono" style="left:10px;top:95px;height:18px">optional arguments:</div><div class="mono" style="left:10px;top:113px;height:18px">  -h, --help  show this help message and exit</div><div class="mono" style="left:10px;top:131px;height:18px">  -c          Delete all files and start from beginning.</div><div class="mono" style="left:10px;top:149px;height:18px">  -i          Ignore processed file and download data again.</div><div class="mono" style="left:10px;top:167px;height:18px">  -b          Backup all files.</div><div class="mono" style="left:10px;top:185px;height:18px">  -s S        Sleep between requests, default 1 second.</div><div class="mono" style="left:10px;top:203px;height:18px">  -r          Save raw JSON too.</div><div class="mono" style="left:10px;top:239px;height:18px"><span style="color:#49aea5;position:relative;top:-1px">┌──</span><span style="color:#49aea5;">(</span><span style="color:#277fff;font-weight:bold">kali<span class="kk">㉿</span>kali</span><span style="color:#49aea5;">)-[</span><span style="color:#fff;font-weight:bold;">~/Desktop/TwiterFun</span><span style="color:#49aea5;">]</span></div><div class="mono" style="left:10px;top:257px;height:18px"><span style="color:#49aea5;">└─</span><span style="color:#277fff;font-weight:bold;">$</span> <span style="display:inline-block;width:8.5px;height:16px;border:1px solid #fff;vertical-align:-3.5px;margin-left:0px"></span></div><div style="left:805px;top:270px;width:5px;height:23px;border-radius:2.500px;background:#5d6068"></div></div><!-- second LibreOffice Calc window: summary_data_per_year.csv -->
<div style="left:630px;top:569px;width:1243px;height:374px;background:#20212b;border-radius:7px 7px 6px 6px;box-shadow:0 4px 16px 3px rgba(0,0,0,0.42);"></div><div style="left:1030px;top:576.5px;width:400px;text-align:center;font-family:'Liberation Sans',sans-serif;font-size:12.300px;-webkit-text-stroke:0.35px #fff;line-height:18px;color:#fff;white-space:pre">summary_data_per_year.csv - LibreOffice Calc</div><svg style="left:641px;top:577px" width="14" height="16" viewBox="0 0 14 16"><path d="M0.600 0.600H7L13.400 6.500V15.400H0.600z" fill="#fff" stroke="#0f8a3a" stroke-width="1.200"/><path d="M9.800 0H14V4.200z" fill="#0f8a3a"/><rect x="3" y="6.200" width="7" height="7" fill="#0f8a3a"/><path d="M4 7.500h2M7 7.500h2M4 9.700h2M7 9.700h2M4 11.900h2M7 11.900h2" stroke="#fff" stroke-width="1"/></svg><div style="left:1800px;top:576px;width:18px;height:18px;border-radius:50%;background:#30333d;border:1px solid #15161b;"></div><div style="left:1824px;top:576px;width:18px;height:18px;border-radius:50%;background:#30333d;border:1px solid #15161b;"></div><div style="left:1848px;top:576px;width:18px;height:18px;border-radius:50%;background:#0a63e9;"></div><svg style="left:1852px;top:580px" width="10" height="10" viewBox="0 0 10 10"><path d="M1.500 1.500l7 7M8.500 1.500l-7 7" stroke="#000" stroke-width="2.200"/></svg><div style="left:634px;top:600px;width:2px;height:75px;background:#b9b9b9;"></div><div style="left:634px;top:675px;width:2px;height:30px;background:#b8b8b8;"></div><div style="left:635px;top:600px;width:1233px;height:75px;background:linear-gradient(90deg,#b9b9b9,#f8f8f8);"></div><div class="ui" style="left:640px;top:602px;line-height:15px;font-size:11px"><span class="u" style="position:static">F</span>ile</div><div class="ui" style="left:671px;top:602px;line-height:15px;font-size:11px"><span class="u" style="position:static">E</span>dit</div><div class="ui" style="left:704px;top:602px;line-height:15px;font-size:11px"><span class="u" style="position:static">V</span>iew</div><div class="ui" style="left:742px;top:602px;line-height:15px;font-size:11px"><span class="u" style="position:static">I</span>nsert</div><div class="ui" style="left:786px;top:602px;line-height:15px;font-size:11px">F<span class="u" style="position:static">o</span>rmat</div><div class="ui" style="left:837.5px;top:602px;line-height:15px;font-size:11px">St<span class="u" style="position:static">y</span>les</div><div class="ui" style="left:883px;top:602px;line-height:15px;font-size:11px"><span class="u" style="position:static">S</span>heet</div><div class="ui" style="left:927.5px;top:602px;line-height:15px;font-size:11px"><span class="u" style="position:static">D</span>ata</div><div class="ui" style="left:965px;top:602px;line-height:15px;font-size:11px"><span class="u" style="position:static">T</span>ools</div><div class="ui" style="left:1005px;top:602px;line-height:15px;font-size:11px"><span class="u" style="position:static">W</span>indow</div><div class="ui" style="left:1061.5px;top:602px;line-height:15px;font-size:11px"><span class="u" style="position:static">H</span>elp</div><div style="left:635px;top:619px;width:941px;height:27px;background:linear-gradient(180deg,#f4f4f4 0%,#e4e4e4 45%,#c6c6c6 100%);"></div><div style="left:635px;top:646px;width:1055px;height:29px;background:linear-gradient(180deg,#f4f4f4 0%,#e4e4e4 45%,#c6c6c6 100%);"></div><svg style="left:640.7px;top:623.0px" width="18" height="18" viewBox="0 0 16 16"><path d="M1.900 1.400h6.600l5.600 5.200v8H1.900z" fill="#fff" stroke="#0f8a3a" stroke-width="1"/><path d="M10.700 0.900h3.900v3.700z" fill="#0f8a3a"/><rect x="4.300" y="7" width="6.800" height="6" fill="#0f8a3a"/><path d="M5.200 8.300h2M8.200 8.300h2M5.200 10h2M8.200 10h2M5.200 11.700h2M8.200 11.700h2" stroke="#fff" stroke-width=".8"/></svg><svg style="left:661.7px;top:631.5px" width="8" height="5" viewBox="0 0 8 5"><path d="M0.5 0.5h7L4 4.5z" fill="#000"/></svg><svg style="left:673.7px;top:623.0px" width="18" height="18" viewBox="0 0 16 16"><path d="M1.5 13.5v-10h4l1.5 2h6.5v2" fill="#fff" stroke="#ed8733"/><path d="M1.5 13.5l2.5-6h11l-2.5 6z" fill="#fbd68b" stroke="#ed8733"/></svg><svg style="left:695.7px;top:631.5px" width="8" height="5" viewBox="0 0 8 5"><path d="M0.5 0.5h7L4 4.5z" fill="#000"/></svg><svg style="left:708.2px;top:623.0px" width="18" height="18" viewBox="0 0 16 16"><path d="M1.5 1.5h11l2 2v11h-13z" fill="#d58fd3" stroke="#a33e9f"/><rect x="4.5" y="1.5" width="7" height="5" fill="#fff" stroke="#a33e9f"/><rect x="4.5" y="9.5" width="7" height="5" fill="#fff" stroke="#a33e9f"/><rect x="6" y="11" width="2" height="3.5" fill="#a33e9f"/></svg><svg style="left:730.2px;top:631.5px" width="8" height="5" viewBox="0 0 8 5"><path d="M0.5 0.5h7L4 4.5z" fill="#000"/></svg><div style="left:744px;top:626px;width:1px;height:13px;background:#9c9c9c;"></div><svg style="left:751.2px;top:623.0px" width="18" height="18" viewBox="0 0 16 16"><path d="M3.5 1.5h6l3 3v10h-9z" fill="#fff" stroke="#3a3a38"/><path d="M9.5 1.5v3h3" fill="none" stroke="#3a3a38"/><path d="M8 15c1-2 2-5 2-7 0 2 2 4 5 5-3 0-5 1-7 2z" fill="none" stroke="#e9292b" stroke-width="1.2"/></svg><svg style="left:774.7px;top:623.0px" width="18" height="18" viewBox="0 0 16 16"><rect x="4.5" y="1.5" width="7" height="4" fill="#fff" stroke="#3a3a38"/><rect x="1.5" y="5.5" width="13" height="6" rx="1" fill="#6d6d6b" stroke="#3a3a38"/><rect x="4.5" y="9.5" width="7" height="5" fill="#fff" stroke="#3a3a38"/></svg><svg style="left:798.2px;top:623.0px" width="18" height="18" viewBox="0 0 16 16"><path d="M2.5 1.5h9v13h-9z" fill="#fff" stroke="#3a3a38"/><circle cx="10" cy="10" r="3" fill="#fff" stroke="#1e8bcd" stroke-width="1.3"/><path d="M12.2 12.2l2.8 2.8" stroke="#1e8bcd" stroke-width="1.6"/></svg><div style="left:820px;top:626px;width:1px;height:13px;background:#9c9c9c;"></div><svg style="left:827.7px;top:623.0px" width="18" height="18" viewBox="0 0 16 16"><path d="M4 1l5.5 10M12 1L6.5 11" stroke="#3a3a38" stroke-width="1.2" fill="none"/><circle cx="4.5" cy="12.5" r="2" fill="none" stroke="#1e8bcd" stroke-width="1.2"/><circle cx="11.5" cy="12.5" r="2" fill="none" stroke="#1e8bcd" stroke-width="1.2"/></svg><svg style="left:851.2px;top:623.0px" width="18" height="18" viewBox="0 0 16 16"><path d="M1.5 1.5h6l2 2v8h-8z" fill="#fff" stroke="#3a3a38"/><path d="M6.5 4.5h5l3 3v7h-8z" fill="#fff" stroke="#3a3a38"/><path d="M8 9.5h5M8 11.5h5" stroke="#1e8bcd"/><path d="M3 5.5h2M3 7.5h2" stroke="#1e8bcd"/></svg><svg style="left:874.7px;top:623.0px" width="18" height="18" viewBox="0 0 16 16"><path d="M2.5 3.5h10v11h-10z" fill="#fff" stroke="#ed8733"/><rect x="5.5" y="1.5" width="4" height="3" fill="#fff" stroke="#3a3a38"/><path d="M7.5 7.5h4l3 3v4h-7z" fill="#fff" stroke="#3a3a38"/></svg><svg style="left:894.7px;top:631.5px" width="8" height="5" viewBox="0 0 8 5"><path d="M0.5 0.5h7L4 4.5z" fill="#000"/></svg><div style="left:907px;top:626px;width:1px;height:13px;background:#9c9c9c;"></div><svg style="left:915.7px;top:623.0px" width="18" height="18" viewBox="0 0 16 16"><rect x="6.5" y="1.5" width="3" height="6" rx="1" fill="#fff" stroke="#3a3a38"/><path d="M3.500 7.500h9v3h-9z" fill="#fff" stroke="#3a3a38"/><path d="M3.5 10.500h9l1 4h-11z" fill="#f8c58c" stroke="#ed8733"/></svg><svg style="left:939.2px;top:623.0px" width="18" height="18" viewBox="0 0 16 16"><path d="M2 13L7 1.500l3.500 8M3.500 9.5h5" fill="none" stroke="#3a3a38" stroke-width="1.300"/><path d="M1 14.5h8" stroke="#3a3a38"/><path d="M9 11l4-5 3 2.500-4 5z" fill="#e9292b"/></svg><div style="left:961px;top:626px;width:1px;height:13px;background:#9c9c9c;"></div><svg style="left:969.7px;top:623.0px" width="18" height="18" viewBox="0 0 16 16"><path d="M1.500 1.500v5h5M1.700 6.300C4.500 2.500 9 1 11.800 3.200c2.700 2.300 1.700 5.500-0.800 7.800L6.500 15" fill="none" stroke="#b4b4b4" stroke-width="1.150"/></svg><svg style="left:990.7px;top:631.5px" width="8" height="5" viewBox="0 0 8 5"><path d="M0.5 0.5h7L4 4.5z" fill="#9a9a9a"/></svg><svg style="left:1003.7px;top:623.0px" width="18" height="18" viewBox="0 0 16 16"><path d="M14.500 1.500v5h-5M14.300 6.300C11.500 2.500 7 1 4.200 3.200c-2.700 2.300-1.700 5.500 0.800 7.800L9.500 15" fill="none" stroke="#b4b4b4" stroke-width="1.150"/></svg><svg style="left:1025.2px;top:631.5px" width="8" height="5" viewBox="0 0 8 5"><path d="M0.5 0.5h7L4 4.5z" fill="#9a9a9a"/></svg><div style="left:1036px;top:626px;width:1px;height:13px;background:#9c9c9c;"></div><svg style="left:1046.7px;top:623.0px" width="18" height="18" viewBox="0 0 16 16"><circle cx="8.500" cy="5.800" r="5" fill="#fff" stroke="#3a3a38" stroke-width="1.100"/><path d="M5 9.500L0.800 14.500" stroke="#3a3a38" stroke-width="1.400"/><text x="5.700" y="8.800" font-size="8.500" font-family="DejaVu Sans" fill="#1e8bcd">a</text><text x="10.500" y="15.800" font-size="9" font-family="DejaVu Sans" fill="#3a3a38">d</text></svg><svg style="left:1069.7px;top:623.0px" width="18" height="18" viewBox="0 0 16 16"><text x="0.500" y="8.500" font-size="10.500" font-family="DejaVu Sans" fill="#3a3a38" textLength="14" lengthAdjust="spacingAndGlyphs">ab</text><path d="M6.500 12.500l2.500 2.500 5.500-5" fill="none" stroke="#18a303" stroke-width="1.300"/></svg><div style="left:1091px;top:626px;width:1px;height:13px;background:#9c9c9c;"></div><svg style="left:1099.7px;top:623.0px" width="18" height="18" viewBox="0 0 16 16"><rect x="1" y="1" width="14" height="14" fill="#fff"/><rect x="1" y="5.700" width="14" height="4.600" fill="#4da0e6"/><path d="M1 1h14v14H1zM5.700 1v14M10.300 1v14M1 5.700h14M1 10.300h14" stroke="#3a3a38" stroke-width=".9" fill="none"/></svg><svg style="left:1121.2px;top:631.5px" width="8" height="5" viewBox="0 0 8 5"><path d="M0.5 0.5h7L4 4.5z" fill="#000"/></svg><svg style="left:1133.7px;top:623.0px" width="18" height="18" viewBox="0 0 16 16"><rect x="1" y="1" width="14" height="14" fill="#fff"/><rect x="5.700" y="1" width="4.600" height="14" fill="#4da0e6"/><path d="M1 1h14v14H1zM5.700 1v14M10.300 1v14M1 5.700h14M1 10.300h14" stroke="#3a3a38" stroke-width=".9" fill="none"/></svg><svg style="left:1155.2px;top:631.5px" width="8" height="5" viewBox="0 0 8 5"><path d="M0.5 0.5h7L4 4.5z" fill="#000"/></svg><div style="left:1168px;top:626px;width:1px;height:13px;background:#9c9c9c;"></div><svg style="left:1176.2px;top:623.0px" width="18" height="18" viewBox="0 0 16 16"><rect x="1.500" y="1.500" width="13" height="13" fill="#fff" stroke="#3a3a38"/><rect x="1.500" y="1.500" width="13" height="1.500" fill="#3a3a38"/><text x="2.500" y="12.500" font-size="9.500" font-family="DejaVu Sans" fill="#1e8bcd">A</text><text x="8.500" y="12.500" font-size="8.500" font-family="DejaVu Sans" fill="#a33e9f">z</text></svg><svg style="left:1199.2px;top:623.0px" width="18" height="18" viewBox="0 0 16 16"><text x="0.500" y="7.500" font-size="8.500" font-family="DejaVu Sans" fill="#1e8bcd">A</text><text x="0.500" y="15.500" font-size="8.500" font-family="DejaVu Sans" fill="#a33e9f">Z</text><path d="M11.500 1v13.500M8 11l3.500 3.500L15 11" fill="none" stroke="#3a3a38" stroke-width="1.100"/></svg><svg style="left:1222.2px;top:623.0px" width="18" height="18" viewBox="0 0 16 16"><text x="0.500" y="7.500" font-size="8.500" font-family="DejaVu Sans" fill="#a33e9f">Z</text><text x="0.500" y="15.500" font-size="8.500" font-family="DejaVu Sans" fill="#1e8bcd">A</text><path d="M11.500 1v13.500M8 11l3.500 3.500L15 11" fill="none" stroke="#3a3a38" stroke-width="1.100"/></svg><svg style="left:1245.7px;top:623.0px" width="18" height="18" viewBox="0 0 16 16"><path d="M12 6.500L14.800 4.200V1.900H1.200v2.300L6.800 9.200V14.800" fill="#fff" stroke="#3a3a38" stroke-width="1"/><path d="M15 8l-6.500 3.300 2.600.600L7.300 16l6.700-4.600-2.600-.600z" fill="#ed8733"/><path d="M11.500 10.500l-.8 1.500" stroke="#ffd27a" stroke-width=".8"/></svg><div style="left:1268px;top:626px;width:1px;height:13px;background:#9c9c9c;"></div><svg style="left:1276.2px;top:623.0px" width="18" height="18" viewBox="0 0 16 16"><rect x="1.400" y="1.400" width="13.200" height="13.200" fill="#fff" stroke="#3a3a38" stroke-width="1.100"/><path d="M2 13l3.500-3.800 1.800 2 3.700-4.200 3.200 3.300V14H2z" fill="#6db8ee" stroke="#0d62b0" stroke-width=".9"/><path d="M4 14l3.300-2.800" stroke="#0d62b0" stroke-width=".9"/><circle cx="4.900" cy="4.700" r="1.300" fill="#fdd17a" stroke="#ed8733" stroke-width=".9"/></svg><svg style="left:1299.7px;top:623.0px" width="18" height="18" viewBox="0 0 16 16"><rect x="2" y="8" width="3" height="7" fill="#83beec" stroke="#1e8bcd"/><rect x="6.500" y="1.500" width="3" height="13.500" fill="#f8c58c" stroke="#ed8733"/><rect x="11" y="10" width="3" height="5" fill="#797774" stroke="#3a3a38"/></svg><svg style="left:1322.7px;top:623.0px" width="18" height="18" viewBox="0 0 16 16"><path d="M2 2.500v11.500M0.500 2.500h3M0.500 14h3M5 1.500h9.500" fill="none" stroke="#3a3a38" stroke-width="1.300"/><path d="M13 4.500v5c0 1.500-1 2.500-2.500 2.500H5M7.500 9.500L5 12l2.500 2.500M10.500 7L13 4.500 15.500 7" fill="none" stroke="#1e8bcd" stroke-width="1.100"/></svg><div style="left:1343px;top:626px;width:1px;height:13px;background:#9c9c9c;"></div><svg style="left:1352.7px;top:623.0px" width="18" height="18" viewBox="0 0 16 16"><path d="M2 14h4.500v-1.500C4 11.500 2.500 9.500 2.500 7a5.500 5.500 0 0 1 11 0c0 2.500-1.500 4.500-4 5.500V14H14" fill="none" stroke="#3a3a38" stroke-width="1.300"/></svg><svg style="left:1373.7px;top:631.5px" width="8" height="5" viewBox="0 0 8 5"><path d="M0.5 0.5h7L4 4.5z" fill="#000"/></svg><svg style="left:1387.2px;top:623.0px" width="18" height="18" viewBox="0 0 16 16"><circle cx="8" cy="7" r="5.500" fill="#fff" stroke="#3a3a38"/><path d="M2.500 7h11M8 1.500c-3 3-3 8 0 11M8 1.500c3 3 3 8 0 11" fill="none" stroke="#3a3a38"/><rect x="3" y="11" width="5" height="3.500" rx="1.500" fill="#fff" stroke="#1e8bcd" stroke-width="1.200"/><rect x="8" y="11" width="5" height="3.500" rx="1.500" fill="#fff" stroke="#1e8bcd" stroke-width="1.200"/></svg><svg style="left:1410.7px;top:623.0px" width="18" height="18" viewBox="0 0 16 16"><path d="M1.500 2.500h13v9h-8l-3 3v-3h-2z" fill="#fff" stroke="#3a3a38"/></svg><svg style="left:1433.7px;top:623.0px" width="18" height="18" viewBox="0 0 16 16"><path d="M3.500 1.500h6l3 3v10h-9z" fill="#fff" stroke="#ed8733"/><path d="M9.500 1.500v3h3" fill="none" stroke="#ed8733"/><rect x="5" y="11" width="6" height="2" fill="#ed8733"/><rect x="5" y="3.500" width="2.500" height="2" fill="#ed8733"/></svg><div style="left:1455px;top:626px;width:1px;height:13px;background:#9c9c9c;"></div><svg style="left:1464.2px;top:623.0px" width="18" height="18" viewBox="0 0 16 16"><rect x="1" y="2" width="13" height="11" fill="#fff"/><rect x="1" y="2" width="13" height="4" fill="#4da0e6"/><path d="M1 2h13v11H1zM1 6h13M1 9.500h13M5.500 2v11M10 2v11" stroke="#3a3a38" stroke-width=".9" fill="none"/><rect x="7.500" y="9" width="8" height="4.500" fill="#6d6d6b" stroke="#3a3a38"/><rect x="9.500" y="7.500" width="4" height="2" fill="#fff" stroke="#3a3a38" stroke-width=".8"/><rect x="9.500" y="12" width="4" height="3" fill="#fff" stroke="#3a3a38" stroke-width=".8"/></svg><svg style="left:1486.7px;top:623.0px" width="18" height="18" viewBox="0 0 16 16"><rect x="1.500" y="2.500" width="13" height="11" fill="#fff" stroke="#3a3a38"/><rect x="1.500" y="2.500" width="13" height="3" fill="#1e8bcd"/><rect x="1.500" y="2.500" width="4" height="11" fill="#1e8bcd"/><path d="M1.500 5.500h13M1.500 9.500h13M5.500 2.500v11M10 2.500v11" stroke="#3a3a38" fill="none"/><path d="M3.500 2v5M1 4.500h5M2 3l3 3M5 3L2 6" stroke="#fff" stroke-width=".8"/></svg><svg style="left:1507.7px;top:631.5px" width="8" height="5" viewBox="0 0 8 5"><path d="M0.5 0.5h7L4 4.5z" fill="#000"/></svg><svg style="left:1521.7px;top:623.0px" width="18" height="18" viewBox="0 0 16 16"><rect x="2.500" y="2.500" width="11" height="11" fill="#fff" stroke="#3a3a38"/><rect x="2.500" y="2.500" width="11" height="2.500" fill="#6d6d6b"/><path d="M1 8.500h14" stroke="#1e8bcd" stroke-width="1.200" stroke-dasharray="3 1.500"/></svg><div style="left:1544px;top:626px;width:1px;height:13px;background:#9c9c9c;"></div><svg style="left:1552.7px;top:623.0px" width="18" height="18" viewBox="0 0 16 16"><rect x="1.500" y="5.500" width="8" height="8" fill="#fff" stroke="#3a3a38"/><circle cx="10.500" cy="5.500" r="4" fill="#fff" stroke="#3a3a38"/><path d="M9 7l5 3-3.500 5-5-3z" fill="#fff" stroke="#3a3a38"/></svg><div style="left:892px;top:653.5px;width:1px;height:13px;background:#9c9c9c;"></div><svg style="left:900.2px;top:650.5px" width="18" height="18" viewBox="0 0 16 16"><text x="2.500" y="14" font-size="16.500" font-weight="bold" font-family="Liberation Sans" fill="#3a3a38">B</text></svg><svg style="left:923.2px;top:650.5px" width="18" height="18" viewBox="0 0 16 16"><text x="5" y="14" font-size="16.500" font-style="italic" font-family="Liberation Sans" fill="#3a3a38">I</text></svg><svg style="left:945.2px;top:650.5px" width="18" height="18" viewBox="0 0 16 16"><text x="2.500" y="12.300" font-size="14.500" font-family="Liberation Sans" fill="#3a3a38">U</text><path d="M2 15h12" stroke="#1e8bcd" stroke-width="1.200"/></svg><svg style="left:966.7px;top:659.5px" width="8" height="5" viewBox="0 0 8 5"><path d="M0.5 0.5h7L4 4.5z" fill="#000"/></svg><div style="left:980px;top:653.5px;width:1px;height:13px;background:#9c9c9c;"></div><svg style="left:987.7px;top:650.5px" width="18" height="18" viewBox="0 0 16 16"><path d="M3 11L8 0.500 13 11M5 7.500h6" fill="none" stroke="#3a3a38" stroke-width="1.400"/><rect x="1" y="12" width="14" height="3.500" fill="#c9211e"/></svg><svg style="left:1008.7px;top:659.5px" width="8" height="5" viewBox="0 0 8 5"><path d="M0.5 0.5h7L4 4.5z" fill="#000"/></svg><svg style="left:1021.2px;top:650.5px" width="18" height="18" viewBox="0 0 16 16"><rect x="1" y="11.300" width="14.200" height="3.900" fill="#ffff00"/><path d="M1.200 11.200V6.200c0-1.300.700-2 2-2h4L4.500 8.500z" fill="#0d6cc4"/><path d="M2.300 10V6.500c0-.700.300-1 .9-1" fill="none" stroke="#6db8ee" stroke-width=".9"/><path d="M6.100 6.900l2 4.300 2.700-.2 3.200-1.700-1.300-2.800-1.100.2V3.400c0-2.700-3.600-2.700-3.600 0v3z" fill="#fff" stroke="#3a3a38" stroke-width=".9"/><path d="M9.800 6.400V3.700c0-.900-.900-.900-.900 0" fill="none" stroke="#3a3a38" stroke-width=".7"/></svg><svg style="left:1043.2px;top:659.5px" width="8" height="5" viewBox="0 0 8 5"><path d="M0.5 0.5h7L4 4.5z" fill="#000"/></svg><div style="left:1056px;top:653.5px;width:1px;height:13px;background:#9c9c9c;"></div><svg style="left:1064.2px;top:650.5px" width="18" height="18" viewBox="0 0 16 16"><path d="M1.500 2.500h13M1.500 5.500h9M1.500 8.500h13M1.500 11.500h9M1.500 14.500h13" stroke="#3a3a38"/></svg><svg style="left:1087.2px;top:650.5px" width="18" height="18" viewBox="0 0 16 16"><path d="M1.500 2.500h13M3.500 5.500h9M1.500 8.500h13M3.500 11.500h9M1.500 14.500h13" stroke="#3a3a38"/></svg><svg style="left:1110.2px;top:650.5px" width="18" height="18" viewBox="0 0 16 16"><path d="M1.500 2.500h13M5.500 5.500h9M1.500 8.500h13M5.500 11.500h9M1.500 14.500h13" stroke="#3a3a38"/></svg><div style="left:1133px;top:653.5px;width:1px;height:13px;background:#9c9c9c;"></div><svg style="left:1140.2px;top:650.5px" width="18" height="18" viewBox="0 0 16 16"><path d="M2 1.500h12" stroke="#3a3a38" stroke-width="1.100"/><path d="M8 15V5M5 8l3-3 3 3" fill="none" stroke="#1e8bcd" stroke-width="1.100"/></svg><svg style="left:1164.2px;top:650.5px" width="18" height="18" viewBox="0 0 16 16"><path d="M1.500 8h13" stroke="#3a3a38" stroke-width="1.100"/><path d="M8 0.500v5M5.500 3L8 5.500 10.500 3M8 15.500v-5M5.500 13L8 10.500l2.500 2.500" fill="none" stroke="#1e8bcd" stroke-width="1.100"/></svg><svg style="left:1187.2px;top:650.5px" width="18" height="18" viewBox="0 0 16 16"><path d="M2 14.500h12M4.500 12h7" stroke="#3a3a38" stroke-width="1.100"/><path d="M8 0.500v9M5 6.500l3 3 3-3" fill="none" stroke="#1e8bcd" stroke-width="1.100"/></svg><div style="left:1210px;top:653.5px;width:1px;height:13px;background:#9c9c9c;"></div><svg style="left:1218.7px;top:650.5px" width="18" height="18" viewBox="0 0 16 16"><path d="M1.500 3.500h13M1.500 13.500h13" fill="none" stroke="#3a3a38"/><path d="M3 7h7c2.500 0 3.500 1.500 4 4M11.500 9l2.500 2.500 1.800-3" fill="none" stroke="#1e8bcd" stroke-width="1.100"/></svg><div style="left:1241px;top:653.5px;width:1px;height:13px;background:#9c9c9c;"></div><svg style="left:1249.2px;top:650.5px" width="18" height="18" viewBox="0 0 16 16"><rect x="1.500" y="2.500" width="13" height="11" fill="none" stroke="#a8a8a8"/><path d="M1.500 5.500h13M1.500 10.500h13M5 8h6" stroke="#a8a8a8" fill="none"/></svg><svg style="left:1272.7px;top:650.5px" width="18" height="18" viewBox="0 0 16 16"><rect x="1.500" y="2.500" width="13" height="11" fill="none" stroke="#a8a8a8"/><path d="M1.500 8h13M8 8v5.500" stroke="#a8a8a8" fill="none"/></svg><svg style="left:1295.7px;top:650.5px" width="18" height="18" viewBox="0 0 16 16"><rect x="1.500" y="2.500" width="13" height="11" fill="none" stroke="#a8a8a8"/><path d="M1.500 6h13M1.500 10h13M6 2.500v11M10.500 2.500v11" stroke="#a8a8a8" fill="none"/></svg><div style="left:1317px;top:653.5px;width:1px;height:13px;background:#9c9c9c;"></div><svg style="left:1325.7px;top:650.5px" width="18" height="18" viewBox="0 0 16 16"><rect x="1.500" y="3.500" width="13" height="9" rx="1" fill="#6d6d6b" stroke="#3a3a38"/><circle cx="6" cy="8" r="2.500" fill="#fff"/><circle cx="10" cy="12" r="2.500" fill="#fff" stroke="#3a3a38"/><circle cx="13" cy="12" r="2" fill="#fff" stroke="#3a3a38"/></svg><svg style="left:1347.2px;top:659.5px" width="8" height="5" viewBox="0 0 8 5"><path d="M0.5 0.5h7L4 4.5z" fill="#000"/></svg><svg style="left:1360.7px;top:650.5px" width="18" height="18" viewBox="0 0 16 16"><text x="1" y="13.500" font-size="14" font-family="DejaVu Sans" fill="#3a3a38">%</text></svg><svg style="left:1383.2px;top:650.5px" width="18" height="18" viewBox="0 0 16 16"><ellipse cx="3.500" cy="8" rx="2.600" ry="6.200" fill="none" stroke="#3a3a38" stroke-width="1.050"/><ellipse cx="12.500" cy="8" rx="2.600" ry="6.200" fill="none" stroke="#3a3a38" stroke-width="1.050"/><rect x="7.200" y="13" width="1.600" height="1.600" fill="#3a3a38"/></svg><svg style="left:1406.2px;top:650.5px" width="18" height="18" viewBox="0 0 16 16"><rect x="1.500" y="3.500" width="13" height="11" fill="#fff" stroke="#3a3a38"/><path d="M4.500 1v4M11.500 1v4M1.500 6h13" stroke="#3a3a38" stroke-width="1.300"/><text x="5" y="13.500" font-size="8" font-family="DejaVu Sans" fill="#3a3a38">7</text></svg><div style="left:1428px;top:653.5px;width:1px;height:13px;background:#9c9c9c;"></div><svg style="left:1437.7px;top:650.5px" width="18" height="18" viewBox="0 0 16 16"><rect x="0.300" y="13" width="1.600" height="1.600" fill="#3a3a38"/><ellipse cx="5" cy="8" rx="2.300" ry="6.200" fill="none" stroke="#3a3a38" stroke-width="1.050"/><ellipse cx="10.800" cy="8" rx="2.300" ry="6.200" fill="none" stroke="#3a3a38" stroke-width="1.050"/><path d="M12.500 9.500v6M9.500 12.500h6" stroke="#1e8bcd" stroke-width="1.200"/></svg><svg style="left:1460.7px;top:650.5px" width="18" height="18" viewBox="0 0 16 16"><rect x="0.300" y="13" width="1.600" height="1.600" fill="#3a3a38"/><ellipse cx="5" cy="8" rx="2.300" ry="6.200" fill="none" stroke="#3a3a38" stroke-width="1.050"/><ellipse cx="10.800" cy="8" rx="2.300" ry="6.200" fill="none" stroke="#9a9a9a" stroke-width="1.050"/><path d="M10.500 10l5 5M15.500 10l-5 5" stroke="#e9292b" stroke-width="1.200"/></svg><div style="left:1483px;top:653.5px;width:1px;height:13px;background:#9c9c9c;"></div><svg style="left:1491.7px;top:650.5px" width="18" height="18" viewBox="0 0 16 16"><path d="M8 2.500h7M8 6.500h7M8 10.500h7M1.500 14.500h13" stroke="#3a3a38"/><path d="M1 6.500h6M4.500 4l2.500 2.500-2.500 2.500" fill="none" stroke="#1e8bcd" stroke-width="1.200"/></svg><svg style="left:1514.2px;top:650.5px" width="18" height="18" viewBox="0 0 16 16"><path d="M8 2.500h7M8 6.500h7M8 10.500h7M1.500 14.500h13" stroke="#3a3a38"/><path d="M7 6.500H1M3.500 4L1 6.500 3.500 9" fill="none" stroke="#1e8bcd" stroke-width="1.200"/></svg><div style="left:1538px;top:653.5px;width:1px;height:13px;background:#9c9c9c;"></div><svg style="left:1543.7px;top:650.5px" width="18" height="18" viewBox="0 0 16 16"><rect x="1.500" y="1.500" width="13" height="13" fill="#fff" stroke="#3a3a38"/><path d="M8 1.500v13M1.500 8h13" stroke="#3a3a38"/><path d="M1 14.500h14" stroke="#ed8733" stroke-width="1.400"/></svg><svg style="left:1565.7px;top:659.5px" width="8" height="5" viewBox="0 0 8 5"><path d="M0.5 0.5h7L4 4.5z" fill="#000"/></svg><svg style="left:1578.7px;top:650.5px" width="18" height="18" viewBox="0 0 16 16"><path d="M0 2h16" stroke="#3a3a38" stroke-width="2.600"/><path d="M0 6h16" stroke="#3a3a38" stroke-width="1.600"/><path d="M0 9.500h16" stroke="#3a3a38" stroke-dasharray="4 1.500"/><path d="M0 12h16" stroke="#3a3a38" stroke-dasharray="1.500 1.500"/><path d="M0 15h16" stroke="#3a3a38" stroke-width="2"/></svg><svg style="left:1600.2px;top:659.5px" width="8" height="5" viewBox="0 0 8 5"><path d="M0.5 0.5h7L4 4.5z" fill="#000"/></svg><svg style="left:1612.7px;top:650.5px" width="18" height="18" viewBox="0 0 16 16"><rect x="0.500" y="0.500" width="15" height="15" fill="#fff" stroke="#1e8bcd"/><rect x="2.500" y="2.500" width="11" height="8" fill="#eee" stroke="#3a3a38"/><rect x="0" y="12" width="16" height="4" fill="#1c4f91"/></svg><svg style="left:1634.2px;top:659.5px" width="8" height="5" viewBox="0 0 8 5"><path d="M0.5 0.5h7L4 4.5z" fill="#000"/></svg><div style="left:1647px;top:653.5px;width:1px;height:13px;background:#9c9c9c;"></div><svg style="left:1654.7px;top:650.5px" width="18" height="18" viewBox="0 0 16 16"><rect x="1.500" y="1.500" width="13" height="13" fill="#fff" stroke="#3a3a38"/><rect x="4" y="1.500" width="9" height="4" fill="#f48a8a" stroke="#e9292b"/><rect x="4" y="6" width="2.500" height="4" fill="#7fd88a"/><rect x="4" y="10" width="2.500" height="4.500" fill="#f48a8a"/><path d="M4 1.500v13" stroke="#3a3a38"/><rect x="7.500" y="7.500" width="8" height="8" fill="#fff" stroke="#3a3a38"/><text x="8.500" y="14.500" font-size="8" font-family="DejaVu Sans" fill="#3a3a38">≠</text></svg><svg style="left:1676.2px;top:659.5px" width="8" height="5" viewBox="0 0 8 5"><path d="M0.5 0.5h7L4 4.5z" fill="#000"/></svg><div style="left:639px;top:649px;width:175px;height:23px;background:#fff;border:1px solid #000;box-shadow:-1px -1px 0 #808080,1px 1px 0 #fff;"></div><div class="ui" style="left:642.5px;top:653.5px;line-height:14px;font-size:11px">Liberation Sans</div><div style="left:798px;top:650px;width:15px;height:21px;background:#b8b8b8;border-left:1px solid #fff;border-top:1px solid #fff;border-right:1px solid #000;border-bottom:1px solid #000;box-shadow:inset -1px -1px 0 #808080;"></div><svg style="left:801.0px;top:657.5px" width="8" height="5" viewBox="0 0 8 5"><path d="M0.5 0.5h7L4 4.5z" fill="#000"/></svg><div style="left:824px;top:649px;width:63px;height:23px;background:#fff;border:1px solid #000;box-shadow:-1px -1px 0 #808080,1px 1px 0 #fff;"></div><div class="ui" style="left:827.5px;top:653.5px;line-height:14px;font-size:11px">10 pt</div><div style="left:871px;top:650px;width:15px;height:21px;background:#b8b8b8;border-left:1px solid #fff;border-top:1px solid #fff;border-right:1px solid #000;border-bottom:1px solid #000;box-shadow:inset -1px -1px 0 #808080;"></div><svg style="left:874.0px;top:657.5px" width="8" height="5" viewBox="0 0 8 5"><path d="M0.5 0.5h7L4 4.5z" fill="#000"/></svg><div style="left:635px;top:675px;width:1233px;height:30px;background:#b8b8b8;"></div><div style="left:639px;top:678px;width:136px;height:23px;background:#fff;border:1px solid #000;box-shadow:-1px -1px 0 #808080,1px 1px 0 #fff;"></div><div class="ui" style="left:642.5px;top:682.5px;line-height:14px;font-size:11px">A1</div><div style="left:759px;top:679px;width:15px;height:21px;background:#b8b8b8;border-left:1px solid #fff;border-top:1px solid #fff;border-right:1px solid #000;border-bottom:1px solid #000;box-shadow:inset -1px -1px 0 #808080;"></div><svg style="left:762.0px;top:686.5px" width="8" height="5" viewBox="0 0 8 5"><path d="M0.5 0.5h7L4 4.5z" fill="#000"/></svg><div style="left:781px;top:682px;width:1px;height:16px;background:#9c9c9c;"></div><div style="left:790px;top:678px;width:18px;height:22px;font-family:'Liberation Serif',serif;font-style:italic;font-size:21px;line-height:22px;color:#1e8bcd;letter-spacing:-0.5px;-webkit-text-stroke:0.3px #1e8bcd">fx</div><div style="left:814px;top:678px;width:14px;height:22px;font-family:'DejaVu Sans',sans-serif;font-size:17px;line-height:22px;color:#2e2e2e">∑</div><svg style="left:831.5px;top:689px" width="8" height="5" viewBox="0 0 8 5"><path d="M0.5 0.5h7L4 4.5z" fill="#000"/></svg><div style="left:849px;top:687px;width:13px;height:2px;background:#2e2e2e;"></div><div style="left:849px;top:692px;width:13px;height:2px;background:#2e2e2e;"></div><div style="left:865px;top:679px;width:924px;height:20px;background:#fff;border-top:1px solid #6a6a6a;border-left:1px solid #6a6a6a;border-bottom:1px solid #6a6a6a;border-right:1px solid #e8e8e8;"></div><div class="ui" style="left:873px;top:681.5px;line-height:16px;font-size:11px">Year</div><svg style="left:1796px;top:684px" width="14" height="8" viewBox="0 0 14 8"><path d="M0.5 0.5h13L7 7.5z" fill="#000"/></svg><div style="left:634px;top:705px;width:1172px;height:175px;overflow:hidden"><div style="left:0px;top:0px;width:1172px;height:175px;background:#fff;overflow:hidden;"></div><div style="left:0px;top:0px;width:1172px;height:15px;background:#b8b8b8;"></div><div style="left:0px;top:15px;width:1172px;height:1px;background:#000;"></div><div style="left:0px;top:16px;width:36px;height:159px;background:#b8b8b8;"></div><div style="left:36px;top:16px;width:1px;height:159px;background:#000;"></div><div style="left:36px;top:0px;width:41px;height:15px;background:#000080;"></div><div style="left:0px;top:16px;width:36px;height:17px;background:#000080;"></div><div style="left:77px;top:1px;width:1px;height:14px;background:#000;"></div><div style="left:77px;top:16px;width:1px;height:159px;background:#c0c0c0;"></div><div style="left:146px;top:1px;width:1px;height:14px;background:#000;"></div><div style="left:146px;top:16px;width:1px;height:159px;background:#c0c0c0;"></div><div style="left:205px;top:1px;width:1px;height:14px;background:#000;"></div><div style="left:205px;top:16px;width:1px;height:159px;background:#c0c0c0;"></div><div style="left:262px;top:1px;width:1px;height:14px;background:#000;"></div><div style="left:262px;top:16px;width:1px;height:159px;background:#c0c0c0;"></div><div style="left:319px;top:1px;width:1px;height:14px;background:#000;"></div><div style="left:319px;top:16px;width:1px;height:159px;background:#c0c0c0;"></div><div style="left:409px;top:1px;width:1px;height:14px;background:#000;"></div><div style="left:409px;top:16px;width:1px;height:159px;background:#c0c0c0;"></div><div style="left:498px;top:1px;width:1px;height:14px;background:#000;"></div><div style="left:498px;top:16px;width:1px;height:159px;background:#c0c0c0;"></div><div style="left:560px;top:1px;width:1px;height:14px;background:#000;"></div><div style="left:560px;top:16px;width:1px;height:159px;background:#c0c0c0;"></div><div style="left:638px;top:1px;width:1px;height:14px;background:#000;"></div><div style="left:638px;top:16px;width:1px;height:159px;background:#c0c0c0;"></div><div style="left:725px;top:1px;width:1px;height:14px;background:#000;"></div><div style="left:725px;top:16px;width:1px;height:159px;background:#c0c0c0;"></div><div style="left:828px;top:1px;width:1px;height:14px;background:#000;"></div><div style="left:828px;top:16px;width:1px;height:159px;background:#c0c0c0;"></div><div style="left:916px;top:1px;width:1px;height:14px;background:#000;"></div><div style="left:916px;top:16px;width:1px;height:159px;background:#c0c0c0;"></div><div style="left:1020px;top:1px;width:1px;height:14px;background:#000;"></div><div style="left:1020px;top:16px;width:1px;height:159px;background:#c0c0c0;"></div><div style="left:1088px;top:1px;width:1px;height:14px;background:#000;"></div><div style="left:1088px;top:16px;width:1px;height:159px;background:#c0c0c0;"></div><div style="left:1145px;top:1px;width:1px;height:14px;background:#000;"></div><div style="left:1145px;top:16px;width:1px;height:159px;background:#c0c0c0;"></div><div style="left:1216px;top:1px;width:1px;height:14px;background:#000;"></div><div style="left:1216px;top:16px;width:1px;height:159px;background:#c0c0c0;"></div><div class="ui" style="left:37px;top:0px;width:40px;text-align:center;line-height:15px;font-size:11px;font-weight:bold;color:#fff;">A</div><div class="ui" style="left:92px;top:0px;width:40px;text-align:center;line-height:15px;font-size:11px;">B</div><div class="ui" style="left:156px;top:0px;width:40px;text-align:center;line-height:15px;font-size:11px;">C</div><div class="ui" style="left:214px;top:0px;width:40px;text-align:center;line-height:15px;font-size:11px;">D</div><div class="ui" style="left:271px;top:0px;width:40px;text-align:center;line-height:15px;font-size:11px;">E</div><div class="ui" style="left:344px;top:0px;width:40px;text-align:center;line-height:15px;font-size:11px;">F</div><div class="ui" style="left:434px;top:0px;width:40px;text-align:center;line-height:15px;font-size:11px;">G</div><div class="ui" style="left:509px;top:0px;width:40px;text-align:center;line-height:15px;font-size:11px;">H</div><div class="ui" style="left:579px;top:0px;width:40px;text-align:center;line-height:15px;font-size:11px;">I</div><div class="ui" style="left:661px;top:0px;width:40px;text-align:center;line-height:15px;font-size:11px;">J</div><div class="ui" style="left:757px;top:0px;width:40px;text-align:center;line-height:15px;font-size:11px;">K</div><div class="ui" style="left:852px;top:0px;width:40px;text-align:center;line-height:15px;font-size:11px;">L</div><div class="ui" style="left:948px;top:0px;width:40px;text-align:center;line-height:15px;font-size:11px;">M</div><div class="ui" style="left:1034px;top:0px;width:40px;text-align:center;line-height:15px;font-size:11px;">N</div><div class="ui" style="left:1097px;top:0px;width:40px;text-align:center;line-height:15px;font-size:11px;">O</div><div style="left:37px;top:32px;width:1135px;height:1px;background:#c0c0c0;"></div><div style="left:0px;top:32px;width:36px;height:1px;background:#000;"></div><div class="ui" style="left:0px;top:17px;width:36px;text-align:center;line-height:16px;font-size:11px;font-weight:bold;color:#fff;">1</div><div style="left:37px;top:49px;width:1135px;height:1px;background:#c0c0c0;"></div><div style="left:0px;top:49px;width:36px;height:1px;background:#000;"></div><div class="ui" style="left:0px;top:34px;width:36px;text-align:center;line-height:16px;font-size:11px;">2</div><div style="left:37px;top:66px;width:1135px;height:1px;background:#c0c0c0;"></div><div style="left:0px;top:66px;width:36px;height:1px;background:#000;"></div><div class="ui" style="left:0px;top:51px;width:36px;text-align:center;line-height:16px;font-size:11px;">3</div><div style="left:37px;top:83px;width:1135px;height:1px;background:#c0c0c0;"></div><div style="left:0px;top:83px;width:36px;height:1px;background:#000;"></div><div class="ui" style="left:0px;top:68px;width:36px;text-align:center;line-height:16px;font-size:11px;">4</div><div style="left:37px;top:100px;width:1135px;height:1px;background:#c0c0c0;"></div><div style="left:0px;top:100px;width:36px;height:1px;background:#000;"></div><div class="ui" style="left:0px;top:85px;width:36px;text-align:center;line-height:16px;font-size:11px;">5</div><div style="left:37px;top:117px;width:1135px;height:1px;background:#c0c0c0;"></div><div style="left:0px;top:117px;width:36px;height:1px;background:#000;"></div><div class="ui" style="left:0px;top:102px;width:36px;text-align:center;line-height:16px;font-size:11px;">6</div><div style="left:37px;top:134px;width:1135px;height:1px;background:#c0c0c0;"></div><div style="left:0px;top:134px;width:36px;height:1px;background:#000;"></div><div class="ui" style="left:0px;top:119px;width:36px;text-align:center;line-height:16px;font-size:11px;">7</div><div style="left:37px;top:151px;width:1135px;height:1px;background:#c0c0c0;"></div><div style="left:0px;top:151px;width:36px;height:1px;background:#000;"></div><div class="ui" style="left:0px;top:136px;width:36px;text-align:center;line-height:16px;font-size:11px;">8</div><div style="left:37px;top:168px;width:1135px;height:1px;background:#c0c0c0;"></div><div style="left:0px;top:168px;width:36px;height:1px;background:#000;"></div><div class="ui" style="left:0px;top:153px;width:36px;text-align:center;line-height:16px;font-size:11px;">9</div><div style="left:37px;top:185px;width:1135px;height:1px;background:#c0c0c0;"></div><div style="left:0px;top:185px;width:36px;height:1px;background:#000;"></div><div class="ui" style="left:0px;top:170px;width:36px;text-align:center;line-height:16px;font-size:11px;">10</div><div class="cell" style="left:38px;top:16px;">Year</div><div class="cell" style="left:79px;top:16px;">Accounts</div><div class="cell" style="left:148px;top:16px;">Verified</div><div class="cell" style="left:207px;top:16px;">Locked</div><div class="cell" style="left:264px;top:16px;"><span class="sq">NoPost<svg><rect width="100%" height="4" fill="url(#wv)"/></svg></span></div><div class="cell" style="left:321px;top:16px;"><span class="sq">NoFollowers<svg><rect width="100%" height="4" fill="url(#wv)"/></svg></span></div><div class="cell" style="left:411px;top:16px;"><span class="sq">NoFollowing<svg><rect width="100%" height="4" fill="url(#wv)"/></svg></span></div><div class="cell" style="left:500px;top:16px;">L5Posts</div><div class="cell" style="left:562px;top:16px;">L100Posts</div><div class="cell" style="left:640px;top:16px;">L5Following</div><div class="cell" style="left:727px;top:16px;">L100Following</div><div class="cell" style="left:830px;top:16px;">L5Followers</div><div class="cell" style="left:918px;top:16px;">L100Followers</div><div class="cell" style="left:1022px;top:16px;">L50Likes</div><div class="cell" style="left:1090px;top:16px;"><span class="sq">LastRT<svg><rect width="100%" height="4" fill="url(#wv)"/></svg></span></div><div class="cell" style="left:36px;top:33px;width:40px;text-align:right;">2008</div><div class="cell" style="left:77px;top:33px;width:68px;text-align:right;">2</div><div class="cell" style="left:146px;top:33px;width:58px;text-align:right;">2</div><div class="cell" style="left:205px;top:33px;width:56px;text-align:right;">0</div><div class="cell" style="left:262px;top:33px;width:56px;text-align:right;">0</div><div class="cell" style="left:319px;top:33px;width:89px;text-align:right;">0</div><div class="cell" style="left:409px;top:33px;width:88px;text-align:right;">0</div><div class="cell" style="left:498px;top:33px;width:61px;text-align:right;">0</div><div class="cell" style="left:560px;top:33px;width:77px;text-align:right;">0</div><div class="cell" style="left:638px;top:33px;width:86px;text-align:right;">0</div><div class="cell" style="left:725px;top:33px;width:102px;text-align:right;">0</div><div class="cell" style="left:828px;top:33px;width:87px;text-align:right;">0</div><div class="cell" style="left:916px;top:33px;width:103px;text-align:right;">0</div><div class="cell" style="left:1020px;top:33px;width:67px;text-align:right;">0</div><div class="cell" style="left:1088px;top:33px;width:56px;text-align:right;">0</div><div class="cell" style="left:36px;top:50px;width:40px;text-align:right;">2009</div><div class="cell" style="left:77px;top:50px;width:68px;text-align:right;">1</div><div class="cell" style="left:146px;top:50px;width:58px;text-align:right;">1</div><div class="cell" style="left:205px;top:50px;width:56px;text-align:right;">0</div><div class="cell" style="left:262px;top:50px;width:56px;text-align:right;">0</div><div class="cell" style="left:319px;top:50px;width:89px;text-align:right;">0</div><div class="cell" style="left:409px;top:50px;width:88px;text-align:right;">0</div><div class="cell" style="left:498px;top:50px;width:61px;text-align:right;">0</div><div class="cell" style="left:560px;top:50px;width:77px;text-align:right;">0</div><div class="cell" style="left:638px;top:50px;width:86px;text-align:right;">0</div><div class="cell" style="left:725px;top:50px;width:102px;text-align:right;">0</div><div class="cell" style="left:828px;top:50px;width:87px;text-align:right;">0</div><div class="cell" style="left:916px;top:50px;width:103px;text-align:right;">0</div><div class="cell" style="left:1020px;top:50px;width:67px;text-align:right;">0</div><div class="cell" style="left:1088px;top:50px;width:56px;text-align:right;">1</div><div class="cell" style="left:36px;top:67px;width:40px;text-align:right;">2013</div><div class="cell" style="left:77px;top:67px;width:68px;text-align:right;">1</div><div class="cell" style="left:146px;top:67px;width:58px;text-align:right;">1</div><div class="cell" style="left:205px;top:67px;width:56px;text-align:right;">0</div><div class="cell" style="left:262px;top:67px;width:56px;text-align:right;">0</div><div class="cell" style="left:319px;top:67px;width:89px;text-align:right;">0</div><div class="cell" style="left:409px;top:67px;width:88px;text-align:right;">0</div><div class="cell" style="left:498px;top:67px;width:61px;text-align:right;">0</div><div class="cell" style="left:560px;top:67px;width:77px;text-align:right;">0</div><div class="cell" style="left:638px;top:67px;width:86px;text-align:right;">0</div><div class="cell" style="left:725px;top:67px;width:102px;text-align:right;">0</div><div class="cell" style="left:828px;top:67px;width:87px;text-align:right;">0</div><div class="cell" style="left:916px;top:67px;width:103px;text-align:right;">0</div><div class="cell" style="left:1020px;top:67px;width:67px;text-align:right;">0</div><div class="cell" style="left:1088px;top:67px;width:56px;text-align:right;">0</div><div class="cell" style="left:36px;top:84px;width:40px;text-align:right;">2014</div><div class="cell" style="left:77px;top:84px;width:68px;text-align:right;">1</div><div class="cell" style="left:146px;top:84px;width:58px;text-align:right;">1</div><div class="cell" style="left:205px;top:84px;width:56px;text-align:right;">0</div><div class="cell" style="left:262px;top:84px;width:56px;text-align:right;">0</div><div class="cell" style="left:319px;top:84px;width:89px;text-align:right;">0</div><div class="cell" style="left:409px;top:84px;width:88px;text-align:right;">0</div><div class="cell" style="left:498px;top:84px;width:61px;text-align:right;">0</div><div class="cell" style="left:560px;top:84px;width:77px;text-align:right;">0</div><div class="cell" style="left:638px;top:84px;width:86px;text-align:right;">0</div><div class="cell" style="left:725px;top:84px;width:102px;text-align:right;">0</div><div class="cell" style="left:828px;top:84px;width:87px;text-align:right;">0</div><div class="cell" style="left:916px;top:84px;width:103px;text-align:right;">0</div><div class="cell" style="left:1020px;top:84px;width:67px;text-align:right;">0</div><div class="cell" style="left:1088px;top:84px;width:56px;text-align:right;">0</div><div class="cell" style="left:38px;top:101px;">Total</div><div class="cell" style="left:77px;top:101px;width:68px;text-align:right;">5</div><div class="cell" style="left:146px;top:101px;width:58px;text-align:right;">5</div><div class="cell" style="left:205px;top:101px;width:56px;text-align:right;">0</div><div class="cell" style="left:262px;top:101px;width:56px;text-align:right;">0</div><div class="cell" style="left:319px;top:101px;width:89px;text-align:right;">0</div><div class="cell" style="left:409px;top:101px;width:88px;text-align:right;">0</div><div class="cell" style="left:498px;top:101px;width:61px;text-align:right;">0</div><div class="cell" style="left:560px;top:101px;width:77px;text-align:right;">0</div><div class="cell" style="left:638px;top:101px;width:86px;text-align:right;">0</div><div class="cell" style="left:725px;top:101px;width:102px;text-align:right;">0</div><div class="cell" style="left:828px;top:101px;width:87px;text-align:right;">0</div><div class="cell" style="left:916px;top:101px;width:103px;text-align:right;">0</div><div class="cell" style="left:1020px;top:101px;width:67px;text-align:right;">0</div><div class="cell" style="left:1088px;top:101px;width:56px;text-align:right;">1</div><div style="left:36px;top:15px;width:42px;height:18px;border:2px solid #000080;"></div><div style="left:75px;top:30px;width:5px;height:5px;background:#000080;border:0;"></div></div><div style="left:1806px;top:705px;width:16px;height:175px;background:#cacaca;"></div><div style="left:1806px;top:705px;width:16px;height:5px;background:#808080;"></div><div style="left:1810px;top:707px;width:8px;height:1px;background:#000;"></div><div style="left:1806px;top:710px;width:16px;height:16px;background:#b8b8b8;border-left:1px solid #fff;border-top:1px solid #fff;border-right:1px solid #000;border-bottom:1px solid #000;box-shadow:inset -1px -1px 0 #808080;"></div><svg style="left:1810.0px;top:715.0px" width="8" height="5" viewBox="0 0 8 5"><path d="M0.5 4.5h7L4 0.5z" fill="#8a8a8a"/></svg><div style="left:1806px;top:726px;width:16px;height:62px;background:#b8b8b8;border-left:1px solid #fff;border-top:1px solid #fff;border-right:1px solid #000;border-bottom:1px solid #000;box-shadow:inset -1px -1px 0 #808080;"></div><div style="left:1806px;top:864px;width:16px;height:16px;background:#b8b8b8;border-left:1px solid #fff;border-top:1px solid #fff;border-right:1px solid #000;border-bottom:1px solid #000;box-shadow:inset -1px -1px 0 #808080;"></div><svg style="left:1810.0px;top:870.0px" width="8" height="5" viewBox="0 0 8 5"><path d="M0.5 0.5h7L4 4.5z" fill="#000"/></svg><div style="left:1822px;top:675px;width:46px;height:242px;background:#b8b8b8;"></div><div style="left:1821px;top:675px;width:1px;height:242px;background:#777;"></div><div style="left:1842px;top:684px;width:12px;height:1px;background:#2e2e2e;"></div><div style="left:1842px;top:688px;width:12px;height:1px;background:#2e2e2e;"></div><div style="left:1842px;top:692px;width:12px;height:1px;background:#2e2e2e;"></div><div style="left:1833px;top:703px;width:31px;height:31px;border:1px solid #a9a9d6;border-radius:2px;"></div><svg style="left:1836.5px;top:706px" width="24" height="24" viewBox="0 0 24 24"><rect x="2.500" y="3.500" width="19" height="17" fill="#fafafa" stroke="#3a3a38"/><rect x="2.500" y="3.500" width="19" height="3" fill="#797774" stroke="#3a3a38"/><path d="M6 11.500h12M6 15.500h12" stroke="#3a3a38"/><circle cx="14" cy="11.500" r="1.700" fill="#1e8bcd"/><circle cx="10" cy="15.500" r="1.700" fill="#1e8bcd"/></svg><svg style="left:1836.5px;top:738px" width="24" height="24" viewBox="0 0 24 24"><path d="M3 18L9.500 3 16 18M5.500 13h8" fill="none" stroke="#3a3a38" stroke-width="1.600"/><path d="M14 17l7-8.500 1.500 1-6 9z" fill="#fff" stroke="#3a3a38" stroke-width=".8"/><path d="M9 21c1-3 3-4.500 5.500-4 1.500 1 1.500 2.500 0 3.500-2 1-4 1-5.500.5z" fill="#83beec" stroke="#1e8bcd"/></svg><svg style="left:1836.5px;top:769px" width="24" height="24" viewBox="0 0 24 24"><path d="M1.500 18.500v-15h6l2 2h8v3" fill="#fff" stroke="#ed8733"/><path d="M1.500 18.500v-10h16v10z" fill="#fbe0bd" stroke="#ed8733"/><rect x="9.500" y="10.500" width="12" height="10" fill="#83beec" stroke="#3a3a38"/><path d="M10 20l4-4 3 2.500 2-1.500 2.500 3z" fill="#fff"/><circle cx="18" cy="13.500" r="1.200" fill="#fff"/></svg><svg style="left:1836.5px;top:799px" width="24" height="24" viewBox="0 0 24 24"><circle cx="12" cy="12" r="9.500" fill="#fff" stroke="#3a3a38"/><path d="M17 7l-2.500 7.500L7 17l2.500-7.500z" fill="#1e8bcd"/><circle cx="12" cy="12" r="1.300" fill="#fff"/></svg><div style="left:1839px;top:826px;width:26px;height:30px;font-family:'Liberation Serif',serif;font-style:italic;font-size:26px;line-height:30px;color:#1e8bcd;letter-spacing:-1px;-webkit-text-stroke:0.4px #1e8bcd">fx</div><div style="left:1822px;top:760px;width:7px;height:72px;background:#000;"></div><svg style="left:1823px;top:792.0px" width="6" height="8" viewBox="0 0 6 8"><path d="M1 0.500v7L5 4z" fill="#9a9a9a"/></svg><div style="left:634px;top:880px;width:1189px;height:37px;background:#b8b8b8;"></div><div style="left:634px;top:880px;width:1172px;height:15px;background:#cacaca;"></div><div style="left:635px;top:880px;width:14px;height:15px;background:#b8b8b8;border-left:1px solid #fff;border-top:1px solid #fff;border-right:1px solid #000;border-bottom:1px solid #000;box-shadow:inset -1px -1px 0 #808080;"></div><svg style="left:639.0px;top:883.5px" width="5" height="8" viewBox="0 0 5 8"><path d="M4.5 0.5v7L0.5 4z" fill="#8a8a8a"/></svg><div style="left:649px;top:880px;width:531px;height:15px;background:#b8b8b8;border-left:1px solid #fff;border-top:1px solid #fff;border-right:1px solid #000;border-bottom:1px solid #000;box-shadow:inset -1px -1px 0 #808080;"></div><div style="left:1786px;top:880px;width:14px;height:15px;background:#b8b8b8;border-left:1px solid #fff;border-top:1px solid #fff;border-right:1px solid #000;border-bottom:1px solid #000;box-shadow:inset -1px -1px 0 #808080;"></div><svg style="left:1791.0px;top:883.5px" width="5" height="8" viewBox="0 0 5 8"><path d="M0.5 0.5v7L4.5 4z" fill="#000"/></svg><div style="left:1800px;top:880px;width:6px;height:15px;background:#808080;"></div><div style="left:1803px;top:883px;width:1px;height:9px;background:#000;"></div><svg style="left:646px;top:898.5px" width="11" height="16" viewBox="0 0 11 16"><path d="M1 0v16" stroke="#808080" stroke-width="2"/><path d="M9 0.500v15L2.500 8z" fill="#808080"/><path d="M9.500 0v16M0 16" stroke="#fff" stroke-width="1"/></svg><svg style="left:666.5px;top:898.5px" width="11" height="16" viewBox="0 0 11 16"><path d="M9 0.500v15L1.500 8z" fill="#808080"/><path d="M9.500 0v16" stroke="#fff" stroke-width="1"/></svg><svg style="left:687.5px;top:898.5px" width="11" height="16" viewBox="0 0 11 16"><path d="M1 0.500v15L8.500 8z" fill="#808080"/><path d="M1 16L8.500 8.500" stroke="#fff" stroke-width="1"/></svg><svg style="left:707.5px;top:898.5px" width="11" height="16" viewBox="0 0 11 16"><path d="M9 0v16" stroke="#808080" stroke-width="2"/><path d="M1 0.500v15L7.500 8z" fill="#808080"/><path d="M1 16L7.500 8.500M10.500 0v16" stroke="#fff" stroke-width="1"/></svg><div style="left:733px;top:904px;width:14px;height:3px;background:#000;"></div><div style="left:738.5px;top:899px;width:3px;height:14px;background:#000;"></div><div style="left:757px;top:896px;width:170px;height:20px;background:#fff;"></div><div style="left:757px;top:914px;width:170px;height:2px;background:#000;"></div><div class="ui" style="left:757px;top:898px;width:170px;text-align:center;font-weight:bold;line-height:15px;font-size:11px">summary_data_per_year</div><div style="left:634px;top:917px;width:1234px;height:21px;background:#b8b8b8;"></div><div style="left:634px;top:917px;width:1234px;height:1px;background:#8a8a8a;"></div><div class="ui" style="left:644px;top:921.5px;line-height:14px">Sheet 1 of 1</div><div class="ui" style="left:983px;top:921.5px;line-height:14px">Default</div><div class="ui" style="left:1182px;top:921.5px;line-height:14px">English (USA)</div><div class="ui" style="left:1522px;top:921.5px;line-height:14px">Average: ; Sum: 0</div><div class="ui" style="left:1827px;top:921.5px;line-height:14px">100%</div><div style="left:806px;top:921px;width:1px;height:14px;background:#5a5a5a;"></div><div style="left:807px;top:921px;width:1px;height:14px;background:#fff;"></div><div style="left:974px;top:921px;width:1px;height:14px;background:#5a5a5a;"></div><div style="left:975px;top:921px;width:1px;height:14px;background:#fff;"></div><div style="left:1125px;top:921px;width:1px;height:14px;background:#5a5a5a;"></div><div style="left:1126px;top:921px;width:1px;height:14px;background:#fff;"></div><div style="left:1310px;top:921px;width:1px;height:14px;background:#5a5a5a;"></div><div style="left:1311px;top:921px;width:1px;height:14px;background:#fff;"></div><div style="left:1378px;top:921px;width:1px;height:14px;background:#5a5a5a;"></div><div style="left:1379px;top:921px;width:1px;height:14px;background:#fff;"></div><div style="left:1407px;top:921px;width:1px;height:14px;background:#5a5a5a;"></div><div style="left:1408px;top:921px;width:1px;height:14px;background:#fff;"></div><div style="left:1437px;top:921px;width:1px;height:14px;background:#5a5a5a;"></div><div style="left:1438px;top:921px;width:1px;height:14px;background:#fff;"></div><div style="left:1466px;top:921px;width:1px;height:14px;background:#5a5a5a;"></div><div style="left:1467px;top:921px;width:1px;height:14px;background:#fff;"></div><div style="left:1676px;top:921px;width:1px;height:14px;background:#5a5a5a;"></div><div style="left:1677px;top:921px;width:1px;height:14px;background:#fff;"></div><div style="left:1819px;top:921px;width:1px;height:14px;background:#5a5a5a;"></div><div style="left:1820px;top:921px;width:1px;height:14px;background:#fff;"></div><svg style="left:1385px;top:922.0px" width="16" height="12" viewBox="0 0 16 12"><rect x="0.500" y="3.500" width="8" height="5" fill="none" stroke="#1e8bcd" stroke-width="1.200"/><path d="M13 1v10M11 1h4M11 11h4" stroke="#2e2e2e" stroke-width="1" fill="none"/></svg><svg style="left:1418px;top:923.0px" width="10" height="10" viewBox="0 0 10 10"><path d="M0.500 0.500h7.500l1.500 1.500v7.500h-9z" fill="#fff" stroke="#2e2e2e"/><rect x="2.500" y="0.500" width="5" height="3" fill="#fff" stroke="#2e2e2e"/><rect x="2.500" y="6" width="5" height="3.500" fill="#2e2e2e"/></svg><div style="left:1687px;top:927.0px;width:9px;height:2px;background:#2e2e2e;"></div><div style="left:1701px;top:927.0px;width:97px;height:1px;background:#2e2e2e;"></div><div style="left:1747px;top:923.0px;width:4px;height:10px;background:#d9d9d9;border:1px solid #3a3a3a;border-radius:1px;"></div><div style="left:1803px;top:927.0px;width:10px;height:2px;background:#2e2e2e;"></div><div style="left:1807px;top:923.0px;width:2px;height:10px;background:#2e2e2e;"></div>
</body></html>
